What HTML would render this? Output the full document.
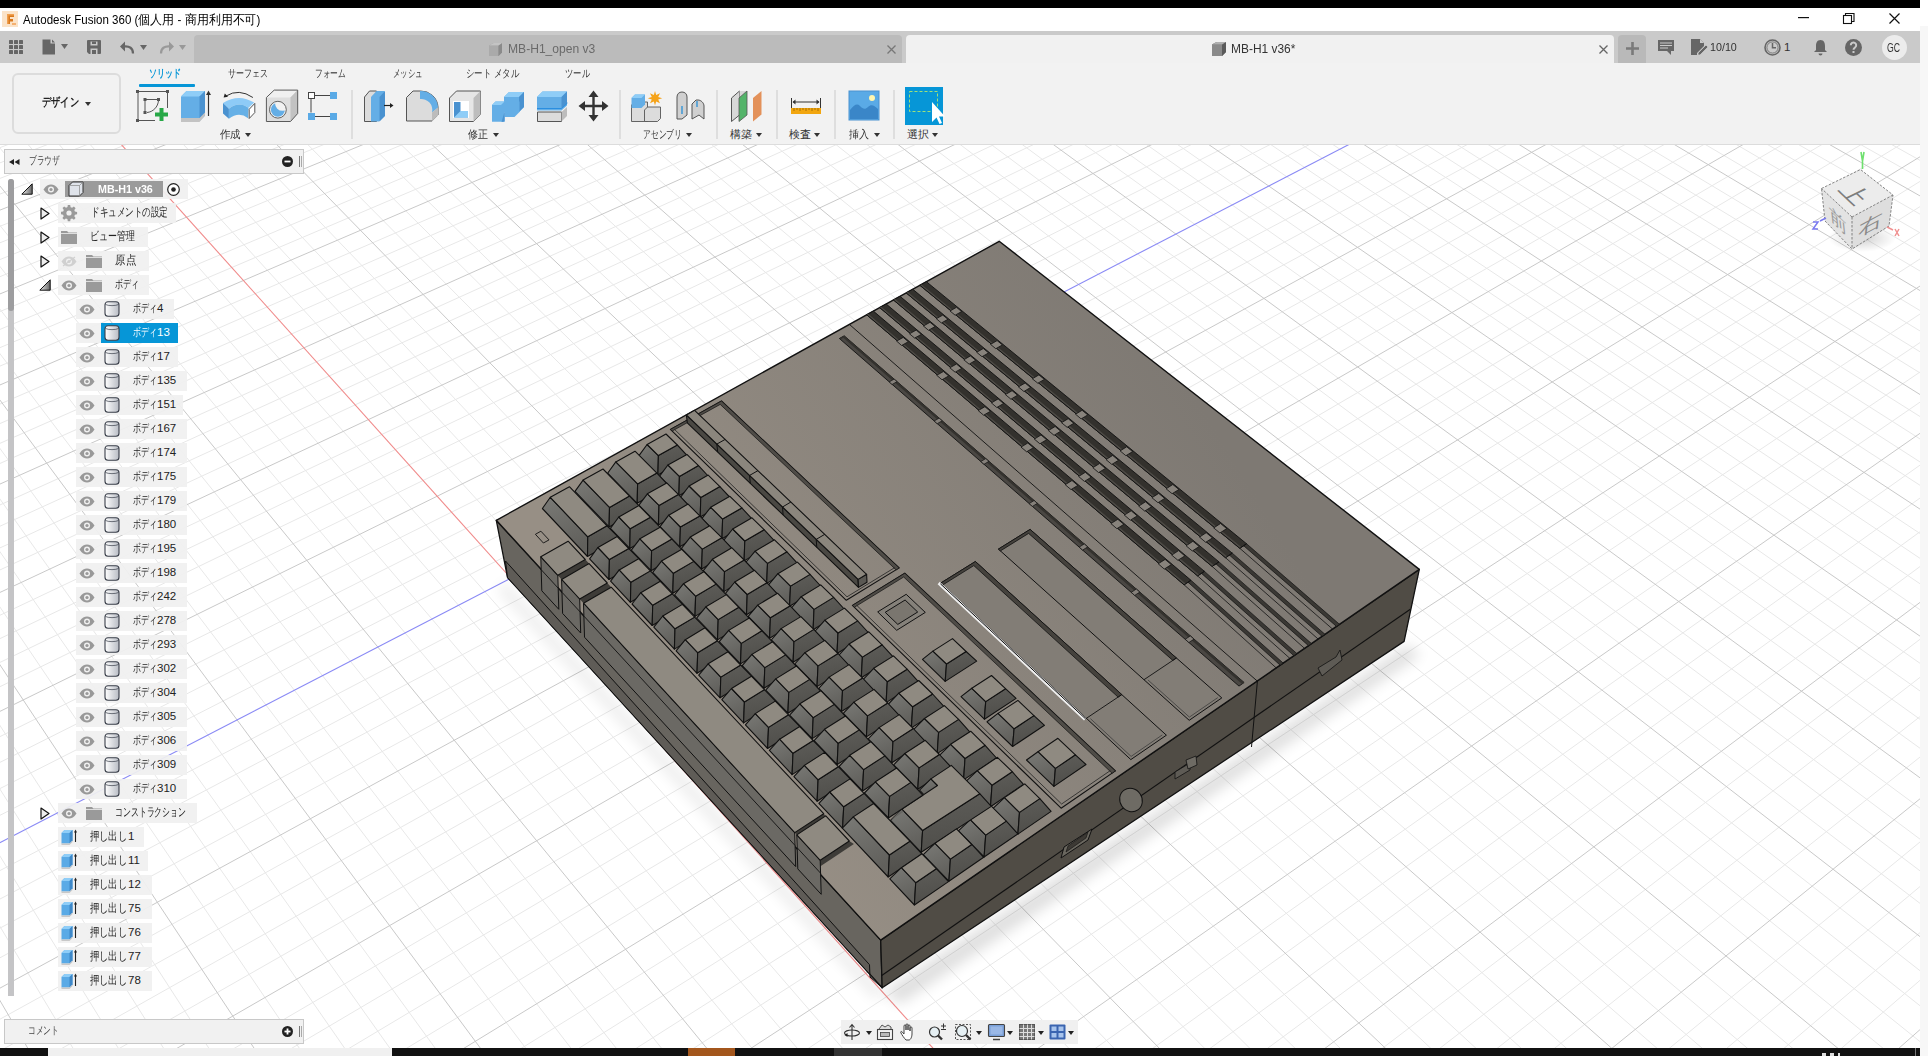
<!DOCTYPE html>
<html><head><meta charset="utf-8">
<style>
*{box-sizing:border-box;margin:0;padding:0}
html,body{width:1928px;height:1056px;overflow:hidden;background:#fff;font-family:"Liberation Sans",sans-serif;color:#333}
.a{position:absolute}
svg{position:absolute;overflow:visible}
.t{position:absolute;white-space:nowrap;line-height:1}
#canvas{position:absolute;left:0;top:144px;width:1920px;height:904px;overflow:hidden;background:#fff}
.row{position:absolute;height:20px;background:rgba(240,240,240,0.93)}
.rl{position:absolute;top:4px;font-size:11.5px;color:#222;white-space:nowrap;line-height:12px}
</style></head><body>
<div id="canvas"><svg style="left:0;top:0" width="1920" height="904" viewBox="0 144 1920 904">
<path d="M-755.3 275.7L1115.5 -389.9M-749.7 288.8L1127.2 -383.8M-744.0 302.1L1139.0 -377.7M-738.3 315.5L1150.9 -371.4M-726.6 342.8L1175.1 -358.8M-720.7 356.7L1187.3 -352.4M-714.6 370.8L1199.7 -346.0M-708.5 385.1L1212.1 -339.5M-696.1 414.2L1237.4 -326.3M-689.7 429.1L1250.1 -319.7M-683.3 444.2L1263.0 -312.9M-676.8 459.4L1276.0 -306.2M-663.5 490.5L1302.4 -292.4M-656.7 506.4L1315.8 -285.4M-649.8 522.5L1329.3 -278.4M-642.8 538.9L1342.9 -271.3M-628.5 572.2L1370.5 -256.9M-621.3 589.2L1384.5 -249.6M-613.9 606.5L1398.6 -242.2M-606.4 624.0L1412.8 -234.8M-591.1 659.8L1441.7 -219.7M-583.3 678.1L1456.4 -212.1M-575.3 696.6L1471.2 -204.4M-567.3 715.4L1486.1 -196.6M-550.8 754.0L1516.4 -180.8M-542.4 773.7L1531.8 -172.7M-533.8 793.7L1547.3 -164.6M-525.2 814.0L1563.0 -156.5M-507.4 855.5L1594.8 -139.9M-498.3 876.8L1610.9 -131.5M-489.0 898.4L1627.2 -123.0M-479.6 920.4L1643.7 -114.4M-460.4 965.4L1677.1 -96.9M-450.5 988.5L1694.1 -88.1M-440.5 1011.9L1711.2 -79.1M-430.3 1035.7L1728.5 -70.1M-409.4 1084.6L1763.7 -51.7M-398.7 1109.7L1781.6 -42.4M-387.8 1135.2L1799.6 -33.0M-376.7 1161.1L1817.9 -23.5M-353.9 1214.4L1854.9 -4.1M-342.2 1241.8L1873.8 5.7M-330.3 1269.6L1892.8 15.6M-318.2 1298.0L1912.1 25.7M-293.3 1356.3L1951.2 46.1M-280.4 1386.2L1971.1 56.4M-267.4 1416.8L1991.2 66.9M-254.1 1447.9L2011.5 77.5M-226.7 1512.0L2052.8 99.1M-212.6 1545.0L2073.8 110.1M-198.2 1578.6L2095.1 121.1M-183.5 1612.9L2116.6 132.4M-153.3 1683.6L2160.4 155.2M-137.7 1720.1L2182.6 166.8M-121.8 1757.3L2205.1 178.6M-105.5 1795.3L2227.9 190.4M-71.9 1873.8L2274.3 214.6M-54.6 1914.4L2297.9 227.0M-36.9 1955.8L2321.8 239.4M-18.8 1998.2L2346.0 252.0M18.7 2085.8L2395.3 277.7M38.1 2131.1L2420.4 290.8M57.9 2177.5L2445.8 304.1M78.2 2225.0L2471.5 317.5M120.3 2323.4L2523.9 344.9M142.1 2374.4L2550.6 358.8M164.4 2426.7L2577.7 372.9M187.4 2480.3L2605.1 387.2M235.0 2591.6L2661.0 416.4M259.7 2649.4L2689.5 431.2M285.1 2708.8L2718.3 446.3M311.2 2769.8L2747.6 461.6M365.5 2896.8L2807.3 492.7M393.8 2963.0L2837.8 508.6M422.9 3031.0L2868.7 524.7M452.8 3101.0L2900.0 541.1M-732.3 252.8L536.9 3116.0M-704.1 242.8L589.1 3060.3M-676.2 232.9L640.1 3005.8M-648.5 223.1L690.0 2952.5M-593.9 203.8L786.5 2849.4M-567.0 194.3L833.2 2799.5M-540.3 184.9L878.9 2750.7M-513.9 175.6L923.7 2702.8M-461.8 157.2L1010.5 2610.1M-436.1 148.1L1052.6 2565.1M-410.6 139.1L1093.8 2521.1M-385.4 130.2L1134.3 2477.9M-335.6 112.6L1212.7 2394.1M-311.0 103.9L1250.8 2353.3M-286.7 95.3L1288.2 2313.4M-262.5 86.8L1324.9 2274.2M-214.9 69.9L1396.2 2198.0M-191.4 61.6L1430.9 2161.0M-168.1 53.4L1464.9 2124.6M-145.0 45.2L1498.4 2088.9M-99.4 29.1L1563.4 2019.4M-76.9 21.2L1595.1 1985.6M-54.6 13.3L1626.2 1952.3M-32.5 5.5L1656.8 1919.6M11.2 -10.0L1716.4 1855.9M32.8 -17.6L1745.5 1824.9M54.2 -25.1L1774.1 1794.4M75.4 -32.6L1802.2 1764.4M117.3 -47.4L1857.0 1705.8M138.0 -54.7L1883.8 1677.2M158.5 -62.0L1910.1 1649.1M178.8 -69.2L1936.0 1621.4M219.1 -83.4L1986.6 1567.4M238.9 -90.4L2011.3 1541.0M258.7 -97.4L2035.6 1515.0M278.2 -104.3L2059.5 1489.4M316.9 -118.0L2106.4 1439.4M335.9 -124.7L2129.3 1414.9M354.9 -131.4L2151.8 1390.8M373.7 -138.0L2174.0 1367.1M410.8 -151.2L2217.5 1320.7M429.2 -157.7L2238.7 1298.0M447.4 -164.1L2259.7 1275.6M465.5 -170.5L2280.4 1253.5M501.3 -183.1L2320.8 1210.3M518.9 -189.4L2340.6 1189.1M536.5 -195.6L2360.1 1168.3M553.9 -201.7L2379.4 1147.7M588.3 -213.9L2417.1 1107.4M605.3 -219.9L2435.6 1087.6M622.2 -225.9L2453.9 1068.1M639.0 -231.8L2471.9 1048.9M672.2 -243.5L2507.2 1011.2M688.6 -249.3L2524.5 992.7M704.9 -255.0L2541.6 974.4M721.0 -260.8L2558.4 956.4M753.0 -272.1L2591.5 921.1M768.8 -277.7L2607.7 903.8M784.6 -283.2L2623.8 886.6M800.1 -288.7L2639.6 869.7M831.0 -299.6L2670.7 836.5M846.3 -305.0L2685.9 820.2M861.4 -310.4L2701.0 804.1M876.5 -315.7L2715.9 788.2M906.3 -326.2L2745.1 757.0M921.0 -331.4L2759.5 741.7M935.7 -336.6L2773.6 726.5M950.2 -341.7L2787.7 711.5M979.0 -351.9L2815.2 682.1M993.3 -356.9L2828.8 667.6M1007.4 -361.9L2842.2 653.3M1021.5 -366.9L2855.4 639.2M1049.3 -376.7L2881.4 611.4M1063.1 -381.6L2894.2 597.7M1076.7 -386.4L2906.9 584.2M1090.3 -391.2L2919.4 570.8" stroke="#e8e8e8" stroke-width="1" fill="none"/>
<path d="M-760.8 262.8L1103.8 -396.0M-732.5 329.0L1163.0 -365.2M-702.3 399.6L1224.7 -333.0M-670.2 474.9L1289.2 -299.3M-635.7 555.4L1356.6 -264.1M-598.8 641.8L1427.2 -227.3M-559.1 734.6L1501.2 -188.7M-516.3 834.6L1578.8 -148.2M-470.1 942.7L1660.3 -105.7M-365.4 1187.5L1836.3 -13.9M-305.8 1326.9L1931.5 35.8M-240.5 1479.6L2032.0 88.2M-168.6 1647.9L2138.3 143.7M-88.9 1834.2L2251.0 202.5M-0.3 2041.5L2370.5 264.8M99.0 2273.6L2497.5 331.1M210.9 2535.2L2632.8 401.7M338.0 2832.4L2777.3 477.0M-760.8 262.8L483.6 3173.0M-621.0 213.4L738.7 2900.4M-487.7 166.3L967.6 2656.0M-360.4 121.3L1173.9 2435.6M-238.6 78.3L1360.9 2235.8M-122.1 37.2L1531.2 2053.9M96.4 -40.1L1829.8 1734.8M199.0 -76.3L1961.5 1594.2M297.6 -111.2L2083.1 1464.2M392.3 -144.6L2195.9 1343.7M483.5 -176.8L2300.7 1231.7M571.2 -207.8L2398.4 1127.4M655.7 -237.7L2489.7 1029.9M737.1 -266.4L2575.1 938.6M815.6 -294.2L2655.2 853.0M891.4 -321.0L2730.6 772.5M964.7 -346.8L2801.5 696.7M1035.4 -371.8L2868.5 625.2" stroke="#c9c9c9" stroke-width="1" fill="none"/>
<path d="M-10.6 -2.3L1686.9 1887.5" stroke="#f08a8a" stroke-width="1.1" fill="none"/>
<path d="M-420.0 1060.0L1746.0 -61.0" stroke="#8a8af5" stroke-width="1.1" fill="none"/>
<defs><linearGradient id="topg" gradientUnits="userSpaceOnUse" x1="672.8" y1="713.0" x2="1193.9" y2="393.4"><stop offset="0" stop-color="#978f85"/><stop offset="1" stop-color="#7e7973"/></linearGradient></defs>
<defs><linearGradient id="kfg" x1="0" y1="0" x2="0.35" y2="1"><stop offset="0" stop-color="#7a7a76"/><stop offset="1" stop-color="#61605c"/></linearGradient><linearGradient id="krg" x1="0" y1="0" x2="0.2" y2="1"><stop offset="0" stop-color="#5e5d59"/><stop offset="1" stop-color="#4f4e4a"/></linearGradient></defs>
<defs><filter id="shb" x="-20%" y="-20%" width="140%" height="140%"><feGaussianBlur stdDeviation="7"/></filter></defs>
<polygon points="884,992 1408,645 1420,655 900,1004" fill="#000" opacity="0.13" filter="url(#shb)"/>
<polygon points="505,582 884,992 876,1000 498,590" fill="#000" opacity="0.08" filter="url(#shb)"/>
<polygon points="496.3,520.3 880.7,940.1 882.2,987.8 507.5,577.5" fill="#68655f" stroke="#111" stroke-width="1.3" stroke-linejoin="round"/>
<polygon points="880.7,940.1 1419.3,569.4 1404.1,641.4 882.2,987.8" fill="#504c45" stroke="#111" stroke-width="1.3" stroke-linejoin="round"/>
<polyline points="881.4,975.7 1410.3,609.2" fill="none" stroke="#111" stroke-width="1.1"/>
<polyline points="1257.5,680.0 1251.5,747.0" fill="none" stroke="#111" stroke-width="1.0"/>
<polygon points="505.5,561.0 869.5,964.7 870.0,977.0 882.2,987.8 507.5,577.5" fill="#5f5c57" stroke="#111" stroke-width="1.0" stroke-linejoin="round"/>
<polygon points="1061.0,858.0 1088.0,840.0 1092.0,829.0 1064.0,847.0" fill="#6a675f" stroke="#111" stroke-width="1.0" stroke-linejoin="round"/>
<polygon points="1066.0,852.0 1086.0,838.0 1088.0,832.0 1068.0,846.0" fill="#3d3a35" stroke="#111" stroke-width="0.6" stroke-linejoin="round"/>
<ellipse cx="1131" cy="800" rx="11" ry="12" fill="#6e6b64" stroke="#111" stroke-width="1" transform="rotate(-35 1131 800)"/>
<polygon points="1175.0,772.0 1190.0,763.0 1190.0,770.0 1175.0,779.0" fill="#5e5b55" stroke="#111" stroke-width="0.8" stroke-linejoin="round"/>
<polygon points="1186.0,760.0 1196.0,756.0 1197.0,765.0 1188.0,769.0" fill="#6e6b64" stroke="#111" stroke-width="0.8" stroke-linejoin="round"/>
<polygon points="1318.0,668.0 1336.0,657.0 1340.0,650.0 1342.0,660.0 1322.0,676.0" fill="#5e5b55" stroke="#111" stroke-width="0.8" stroke-linejoin="round"/>
<polygon points="496.3,520.3 880.7,940.1 1419.3,569.4 999.2,241.3" fill="url(#topg)" stroke="#111" stroke-width="1.4" stroke-linejoin="round"/>
<polyline points="849.4,324.4 1257.2,681.0" fill="none" stroke="#111" stroke-width="0.9"/>
<polygon points="866.7,314.8 1184.1,584.8 1191.0,580.3 873.4,311.1" fill="#33312d" stroke="#111" stroke-width="0.9" stroke-linejoin="round"/>
<polygon points="866.7,314.8 1184.1,584.8 1185.8,583.7 868.4,313.9" fill="#4d4a45" stroke="none" stroke-width="1.1" stroke-linejoin="round"/>
<polyline points="866.7,314.8 1184.1,584.8" fill="none" stroke="#111" stroke-width="0.9"/>
<polygon points="1188.0,582.2 1280.2,665.2 1283.2,663.1 1191.0,580.3" fill="#3a3834" stroke="#111" stroke-width="0.7" stroke-linejoin="round"/>
<polyline points="1184.1,584.8 1276.2,667.9" fill="none" stroke="#111" stroke-width="0.8"/>
<polyline points="1184.1,584.8 1191.0,580.3" fill="none" stroke="#111" stroke-width="0.8"/>
<polygon points="896.6,341.1 901.6,345.5 908.3,341.7 903.2,337.4" fill="#88837c" stroke="#111" stroke-width="0.8" stroke-linejoin="round"/>
<polygon points="936.7,375.3 942.0,379.8 948.7,375.9 943.4,371.5" fill="#88837c" stroke="#111" stroke-width="0.8" stroke-linejoin="round"/>
<polygon points="978.2,410.6 983.6,415.2 990.4,411.3 984.9,406.7" fill="#88837c" stroke="#111" stroke-width="0.8" stroke-linejoin="round"/>
<polygon points="1021.0,447.1 1026.6,451.8 1033.4,447.7 1027.8,443.0" fill="#88837c" stroke="#111" stroke-width="0.8" stroke-linejoin="round"/>
<polygon points="1065.2,484.7 1071.0,489.6 1077.8,485.4 1072.0,480.5" fill="#88837c" stroke="#111" stroke-width="0.8" stroke-linejoin="round"/>
<polygon points="1110.9,523.6 1116.9,528.7 1123.8,524.3 1117.8,519.3" fill="#88837c" stroke="#111" stroke-width="0.8" stroke-linejoin="round"/>
<polygon points="1158.2,563.8 1164.3,569.1 1171.3,564.6 1165.1,559.4" fill="#88837c" stroke="#111" stroke-width="0.8" stroke-linejoin="round"/>
<polygon points="879.7,307.6 1197.6,575.9 1204.5,571.4 886.2,304.0" fill="#33312d" stroke="#111" stroke-width="0.9" stroke-linejoin="round"/>
<polygon points="879.7,307.6 1197.6,575.9 1199.4,574.8 881.3,306.7" fill="#4d4a45" stroke="none" stroke-width="1.1" stroke-linejoin="round"/>
<polyline points="879.7,307.6 1197.6,575.9" fill="none" stroke="#111" stroke-width="0.9"/>
<polygon points="1201.5,573.4 1293.9,655.7 1296.9,653.6 1204.5,571.4" fill="#3a3834" stroke="#111" stroke-width="0.7" stroke-linejoin="round"/>
<polyline points="1197.6,575.9 1289.9,658.4" fill="none" stroke="#111" stroke-width="0.8"/>
<polyline points="1197.6,575.9 1204.5,571.4" fill="none" stroke="#111" stroke-width="0.8"/>
<polygon points="909.5,333.8 914.6,338.1 921.3,334.4 916.2,330.1" fill="#88837c" stroke="#111" stroke-width="0.8" stroke-linejoin="round"/>
<polygon points="949.8,367.8 955.1,372.2 961.7,368.4 956.5,364.0" fill="#88837c" stroke="#111" stroke-width="0.8" stroke-linejoin="round"/>
<polygon points="991.4,402.9 996.8,407.5 1003.5,403.5 998.1,398.9" fill="#88837c" stroke="#111" stroke-width="0.8" stroke-linejoin="round"/>
<polygon points="1034.3,439.1 1039.9,443.8 1046.6,439.7 1041.0,435.0" fill="#88837c" stroke="#111" stroke-width="0.8" stroke-linejoin="round"/>
<polygon points="1078.6,476.5 1084.4,481.4 1091.2,477.2 1085.3,472.3" fill="#88837c" stroke="#111" stroke-width="0.8" stroke-linejoin="round"/>
<polygon points="1124.3,515.1 1130.3,520.2 1137.2,515.9 1131.2,510.8" fill="#88837c" stroke="#111" stroke-width="0.8" stroke-linejoin="round"/>
<polygon points="1171.7,555.1 1177.9,560.3 1184.8,555.9 1178.6,550.6" fill="#88837c" stroke="#111" stroke-width="0.8" stroke-linejoin="round"/>
<polygon points="893.5,300.0 1212.1,566.4 1219.0,561.9 900.0,296.3" fill="#33312d" stroke="#111" stroke-width="0.9" stroke-linejoin="round"/>
<polygon points="893.5,300.0 1212.1,566.4 1213.9,565.3 895.1,299.0" fill="#4d4a45" stroke="none" stroke-width="1.1" stroke-linejoin="round"/>
<polyline points="893.5,300.0 1212.1,566.4" fill="none" stroke="#111" stroke-width="0.9"/>
<polygon points="1216.0,563.9 1308.5,645.7 1311.5,643.6 1219.0,561.9" fill="#3a3834" stroke="#111" stroke-width="0.7" stroke-linejoin="round"/>
<polyline points="1212.1,566.4 1304.6,648.4" fill="none" stroke="#111" stroke-width="0.8"/>
<polyline points="1212.1,566.4 1219.0,561.9" fill="none" stroke="#111" stroke-width="0.8"/>
<polygon points="923.4,326.0 928.5,330.3 935.1,326.5 930.0,322.3" fill="#88837c" stroke="#111" stroke-width="0.8" stroke-linejoin="round"/>
<polygon points="963.8,359.8 969.1,364.2 975.7,360.3 970.4,355.9" fill="#88837c" stroke="#111" stroke-width="0.8" stroke-linejoin="round"/>
<polygon points="1005.4,394.6 1010.9,399.2 1017.5,395.2 1012.1,390.7" fill="#88837c" stroke="#111" stroke-width="0.8" stroke-linejoin="round"/>
<polygon points="1048.4,430.6 1054.0,435.3 1060.7,431.2 1055.1,426.5" fill="#88837c" stroke="#111" stroke-width="0.8" stroke-linejoin="round"/>
<polygon points="1092.8,467.7 1098.6,472.6 1105.4,468.4 1099.6,463.5" fill="#88837c" stroke="#111" stroke-width="0.8" stroke-linejoin="round"/>
<polygon points="1138.7,506.1 1144.7,511.1 1151.5,506.8 1145.5,501.8" fill="#88837c" stroke="#111" stroke-width="0.8" stroke-linejoin="round"/>
<polygon points="1186.1,545.8 1192.3,551.0 1199.2,546.5 1192.9,541.3" fill="#88837c" stroke="#111" stroke-width="0.8" stroke-linejoin="round"/>
<polygon points="906.2,292.9 1225.5,557.7 1232.3,553.2 912.8,289.3" fill="#33312d" stroke="#111" stroke-width="0.9" stroke-linejoin="round"/>
<polygon points="906.2,292.9 1225.5,557.7 1227.3,556.5 907.9,292.0" fill="#4d4a45" stroke="none" stroke-width="1.1" stroke-linejoin="round"/>
<polyline points="906.2,292.9 1225.5,557.7" fill="none" stroke="#111" stroke-width="0.9"/>
<polygon points="1229.4,555.1 1322.0,636.3 1325.0,634.3 1232.3,553.2" fill="#3a3834" stroke="#111" stroke-width="0.7" stroke-linejoin="round"/>
<polyline points="1225.5,557.7 1318.1,639.0" fill="none" stroke="#111" stroke-width="0.8"/>
<polyline points="1225.5,557.7 1232.3,553.2" fill="none" stroke="#111" stroke-width="0.8"/>
<polygon points="936.3,318.7 941.4,323.0 947.9,319.3 942.8,315.1" fill="#88837c" stroke="#111" stroke-width="0.8" stroke-linejoin="round"/>
<polygon points="976.7,352.3 982.0,356.7 988.6,352.9 983.3,348.5" fill="#88837c" stroke="#111" stroke-width="0.8" stroke-linejoin="round"/>
<polygon points="1018.4,386.9 1023.9,391.5 1030.5,387.5 1025.1,383.0" fill="#88837c" stroke="#111" stroke-width="0.8" stroke-linejoin="round"/>
<polygon points="1061.5,422.7 1067.1,427.3 1073.8,423.3 1068.2,418.7" fill="#88837c" stroke="#111" stroke-width="0.8" stroke-linejoin="round"/>
<polygon points="1106.0,459.6 1111.8,464.4 1118.5,460.3 1112.7,455.4" fill="#88837c" stroke="#111" stroke-width="0.8" stroke-linejoin="round"/>
<polygon points="1151.9,497.7 1158.0,502.7 1164.7,498.4 1158.7,493.4" fill="#88837c" stroke="#111" stroke-width="0.8" stroke-linejoin="round"/>
<polygon points="1199.5,537.1 1205.7,542.3 1212.5,537.9 1206.2,532.7" fill="#88837c" stroke="#111" stroke-width="0.8" stroke-linejoin="round"/>
<polygon points="919.9,285.3 1239.8,548.3 1246.6,543.8 926.4,281.7" fill="#33312d" stroke="#111" stroke-width="0.9" stroke-linejoin="round"/>
<polygon points="919.9,285.3 1239.8,548.3 1241.5,547.2 921.5,284.4" fill="#4d4a45" stroke="none" stroke-width="1.1" stroke-linejoin="round"/>
<polyline points="919.9,285.3 1239.8,548.3" fill="none" stroke="#111" stroke-width="0.9"/>
<polygon points="1243.7,545.8 1336.5,626.4 1339.5,624.3 1246.6,543.8" fill="#3a3834" stroke="#111" stroke-width="0.7" stroke-linejoin="round"/>
<polyline points="1239.8,548.3 1332.6,629.1" fill="none" stroke="#111" stroke-width="0.8"/>
<polyline points="1239.8,548.3 1246.6,543.8" fill="none" stroke="#111" stroke-width="0.8"/>
<polygon points="950.0,311.0 955.1,315.2 961.6,311.6 956.5,307.3" fill="#88837c" stroke="#111" stroke-width="0.8" stroke-linejoin="round"/>
<polygon points="990.5,344.4 995.8,348.7 1002.4,344.9 997.1,340.6" fill="#88837c" stroke="#111" stroke-width="0.8" stroke-linejoin="round"/>
<polygon points="1032.3,378.8 1037.8,383.2 1044.4,379.4 1038.9,374.9" fill="#88837c" stroke="#111" stroke-width="0.8" stroke-linejoin="round"/>
<polygon points="1075.5,414.2 1081.1,418.9 1087.8,414.9 1082.1,410.3" fill="#88837c" stroke="#111" stroke-width="0.8" stroke-linejoin="round"/>
<polygon points="1120.1,450.9 1125.9,455.7 1132.6,451.6 1126.7,446.8" fill="#88837c" stroke="#111" stroke-width="0.8" stroke-linejoin="round"/>
<polygon points="1166.1,488.8 1172.1,493.7 1178.9,489.5 1172.8,484.5" fill="#88837c" stroke="#111" stroke-width="0.8" stroke-linejoin="round"/>
<polygon points="1213.7,527.9 1219.9,533.0 1226.7,528.6 1220.5,523.5" fill="#88837c" stroke="#111" stroke-width="0.8" stroke-linejoin="round"/>
<polygon points="839.4,338.5 1239.0,686.1 1244.1,682.5 844.2,335.8" fill="#4a4743" stroke="#111" stroke-width="0.9" stroke-linejoin="round"/>
<polygon points="844.2,335.8 1244.1,682.5 1242.1,684.0 843.3,337.8 840.4,339.5 839.4,338.5" fill="#34322e" stroke="none" stroke-width="1.1" stroke-linejoin="round"/>
<polygon points="889.2,381.9 892.1,384.5 897.1,381.6 894.1,379.1" fill="#85807a" stroke="#111" stroke-width="0.7" stroke-linejoin="round"/>
<polygon points="934.2,421.0 937.2,423.7 942.2,420.8 939.1,418.1" fill="#85807a" stroke="#111" stroke-width="0.7" stroke-linejoin="round"/>
<polygon points="980.8,461.5 984.0,464.3 988.9,461.3 985.8,458.6" fill="#85807a" stroke="#111" stroke-width="0.7" stroke-linejoin="round"/>
<polygon points="1029.1,503.6 1032.4,506.4 1037.4,503.3 1034.1,500.5" fill="#85807a" stroke="#111" stroke-width="0.7" stroke-linejoin="round"/>
<polygon points="1079.2,547.1 1082.6,550.1 1087.7,546.9 1084.3,543.9" fill="#85807a" stroke="#111" stroke-width="0.7" stroke-linejoin="round"/>
<polygon points="1131.2,592.4 1134.7,595.4 1139.8,592.1 1136.3,589.0" fill="#85807a" stroke="#111" stroke-width="0.7" stroke-linejoin="round"/>
<polygon points="1185.2,639.3 1188.9,642.5 1194.0,639.1 1190.3,635.9" fill="#85807a" stroke="#111" stroke-width="0.7" stroke-linejoin="round"/>
<polygon points="940.8,583.0 1130.8,759.6 1166.4,735.2 975.4,561.5" fill="#827d76" stroke="#111" stroke-width="1.0" stroke-linejoin="round"/>
<polygon points="975.4,561.5 1121.8,694.6 1118.1,697.1 973.8,565.6 942.8,584.9 940.8,583.0" fill="#45423d" stroke="#111" stroke-width="0.8" stroke-linejoin="round"/>
<polyline points="1086.4,718.3 1121.8,694.6" fill="none" stroke="#111" stroke-width="0.9"/>
<polyline points="1090.4,718.6 1131.1,756.4 1162.3,734.9" fill="none" stroke="#333" stroke-width="0.7"/>
<polygon points="998.4,549.1 1189.2,720.3 1221.8,697.9 1030.1,529.4" fill="#827d76" stroke="#111" stroke-width="1.0" stroke-linejoin="round"/>
<polygon points="1030.1,529.4 1176.4,658.0 1172.8,660.4 1028.6,533.4 1000.4,550.9 998.4,549.1" fill="#45423d" stroke="#111" stroke-width="0.8" stroke-linejoin="round"/>
<polyline points="1144.0,679.7 1176.4,658.0" fill="none" stroke="#111" stroke-width="0.9"/>
<polyline points="1147.9,679.9 1189.4,717.1 1217.8,697.6" fill="none" stroke="#333" stroke-width="0.7"/>
<polyline points="938.7,583.0 1085.1,719.3" fill="none" stroke="#eeeeee" stroke-width="3.2"/>
<polyline points="940.4,583.8 1085.6,718.9" fill="none" stroke="#111" stroke-width="1.0"/>
<polygon points="670.4,429.4 846.3,600.3 899.2,567.9 721.5,401.0" fill="url(#topg)" stroke="#111" stroke-width="1.1" stroke-linejoin="round"/>
<polygon points="721.5,401.0 899.2,567.9 896.1,569.9 720.2,404.4 672.1,431.1 670.4,429.4" fill="#4f4c47" stroke="#111" stroke-width="0.7" stroke-linejoin="round"/>
<polyline points="674.4,429.3 847.0,596.8 894.6,567.7" fill="none" stroke="#222" stroke-width="0.8"/>
<polygon points="686.4,414.9 858.1,579.4 858.5,587.4 687.3,422.8" fill="#4a4843" stroke="#111" stroke-width="1.1" stroke-linejoin="round"/>
<polygon points="858.1,579.4 866.6,574.3 867.0,582.3 858.5,587.4" fill="#5a5853" stroke="#111" stroke-width="1.1" stroke-linejoin="round"/>
<polygon points="686.4,414.9 858.1,579.4 866.6,574.3 694.6,410.3" fill="#8b867d" stroke="#111" stroke-width="1.1" stroke-linejoin="round"/>
<polyline points="716.8,444.1 725.2,439.4" fill="none" stroke="#111" stroke-width="1.0"/>
<polyline points="716.8,444.1 717.7,452.0" fill="none" stroke="#111" stroke-width="1.0"/>
<polyline points="749.6,475.4 758.0,470.6" fill="none" stroke="#111" stroke-width="1.0"/>
<polyline points="749.6,475.4 750.3,483.4" fill="none" stroke="#111" stroke-width="1.0"/>
<polyline points="782.5,507.0 790.9,502.0" fill="none" stroke="#111" stroke-width="1.0"/>
<polyline points="782.5,507.0 783.1,515.0" fill="none" stroke="#111" stroke-width="1.0"/>
<polyline points="816.2,539.4 824.8,534.3" fill="none" stroke="#111" stroke-width="1.0"/>
<polyline points="816.2,539.4 816.8,547.4" fill="none" stroke="#111" stroke-width="1.0"/>
<polygon points="852.4,605.4 1061.1,808.2 1115.4,770.9 904.8,573.2" fill="url(#topg)" stroke="#111" stroke-width="1.1" stroke-linejoin="round"/>
<polygon points="904.8,573.2 1115.4,770.9 1112.1,773.2 903.7,577.0 854.3,607.3 852.4,605.4" fill="#4f4c47" stroke="#111" stroke-width="0.7" stroke-linejoin="round"/>
<polyline points="856.7,605.3 1061.6,804.0 1110.3,770.6" fill="none" stroke="#222" stroke-width="0.8"/>
<polygon points="877.7,611.9 896.7,630.3 925.3,612.4 906.2,594.3" fill="#85817a" stroke="#111" stroke-width="1.0" stroke-linejoin="round"/>
<polygon points="885.2,612.3 897.8,624.4 917.7,612.0 905.1,600.0" fill="#7a766f" stroke="#111" stroke-width="1.0" stroke-linejoin="round"/>
<polygon points="932.9,651.1 946.5,664.0 945.2,681.4 922.5,659.4" fill="url(#kfg)" stroke="#111" stroke-width="1.1" stroke-linejoin="round"/>
<polygon points="946.5,664.0 966.1,651.5 976.7,661.1 945.2,681.4" fill="url(#krg)" stroke="#111" stroke-width="1.1" stroke-linejoin="round"/>
<polygon points="932.9,651.1 946.5,664.0 966.1,651.5 952.5,638.6" fill="#8f8a81" stroke="#111" stroke-width="1.1" stroke-linejoin="round"/>
<polygon points="971.8,688.3 985.7,701.6 984.4,719.2 961.0,696.6" fill="url(#kfg)" stroke="#111" stroke-width="1.1" stroke-linejoin="round"/>
<polygon points="985.7,701.6 1005.5,688.7 1016.1,698.4 984.4,719.2" fill="url(#krg)" stroke="#111" stroke-width="1.1" stroke-linejoin="round"/>
<polygon points="971.8,688.3 985.7,701.6 1005.5,688.7 991.5,675.5" fill="#8f8a81" stroke="#111" stroke-width="1.1" stroke-linejoin="round"/>
<polygon points="998.0,713.4 1014.1,728.8 1012.6,746.5 987.0,721.8" fill="url(#kfg)" stroke="#111" stroke-width="1.1" stroke-linejoin="round"/>
<polygon points="1014.1,728.8 1033.9,715.6 1044.5,725.3 1012.6,746.5" fill="url(#krg)" stroke="#111" stroke-width="1.1" stroke-linejoin="round"/>
<polygon points="998.0,713.4 1014.1,728.8 1033.9,715.6 1017.9,700.4" fill="#8f8a81" stroke="#111" stroke-width="1.1" stroke-linejoin="round"/>
<polygon points="1038.0,751.7 1055.4,768.4 1053.9,786.4 1026.5,760.0" fill="url(#kfg)" stroke="#111" stroke-width="1.1" stroke-linejoin="round"/>
<polygon points="1055.4,768.4 1075.4,754.8 1086.0,764.5 1053.9,786.4" fill="url(#krg)" stroke="#111" stroke-width="1.1" stroke-linejoin="round"/>
<polygon points="1038.0,751.7 1055.4,768.4 1075.4,754.8 1057.9,738.3" fill="#8f8a81" stroke="#111" stroke-width="1.1" stroke-linejoin="round"/>
<polygon points="535.4,534.3 543.4,543.0 549.0,539.9 540.9,531.2" fill="url(#topg)" stroke="#111" stroke-width="0.9" stroke-linejoin="round"/>
<polygon points="647.1,444.5 658.4,455.6 657.9,474.9 638.8,455.9" fill="url(#kfg)" stroke="#111" stroke-width="1.1" stroke-linejoin="round"/>
<polygon points="658.4,455.6 677.3,445.0 688.9,457.4 657.9,474.9" fill="url(#krg)" stroke="#111" stroke-width="1.1" stroke-linejoin="round"/>
<polygon points="647.1,444.5 658.4,455.6 677.3,445.0 666.0,434.0" fill="#8f8a81" stroke="#111" stroke-width="1.1" stroke-linejoin="round"/>
<polygon points="667.9,465.0 679.4,476.4 678.9,495.8 659.4,476.4" fill="url(#kfg)" stroke="#111" stroke-width="1.1" stroke-linejoin="round"/>
<polygon points="679.4,476.4 698.5,465.6 710.0,478.0 678.9,495.8" fill="url(#krg)" stroke="#111" stroke-width="1.1" stroke-linejoin="round"/>
<polygon points="667.9,465.0 679.4,476.4 698.5,465.6 686.9,454.4" fill="#8f8a81" stroke="#111" stroke-width="1.1" stroke-linejoin="round"/>
<polygon points="689.1,486.0 700.8,497.5 700.2,517.1 680.4,497.4" fill="url(#kfg)" stroke="#111" stroke-width="1.1" stroke-linejoin="round"/>
<polygon points="700.8,497.5 719.9,486.6 731.5,499.0 700.2,517.1" fill="url(#krg)" stroke="#111" stroke-width="1.1" stroke-linejoin="round"/>
<polygon points="689.1,486.0 700.8,497.5 719.9,486.6 708.2,475.1" fill="#8f8a81" stroke="#111" stroke-width="1.1" stroke-linejoin="round"/>
<polygon points="710.7,507.3 722.6,519.1 722.0,538.8 701.8,518.7" fill="url(#kfg)" stroke="#111" stroke-width="1.1" stroke-linejoin="round"/>
<polygon points="722.6,519.1 741.8,507.9 753.4,520.4 722.0,538.8" fill="url(#krg)" stroke="#111" stroke-width="1.1" stroke-linejoin="round"/>
<polygon points="710.7,507.3 722.6,519.1 741.8,507.9 729.9,496.3" fill="#8f8a81" stroke="#111" stroke-width="1.1" stroke-linejoin="round"/>
<polygon points="732.7,529.0 744.8,541.0 744.1,560.9 723.6,540.4" fill="url(#kfg)" stroke="#111" stroke-width="1.1" stroke-linejoin="round"/>
<polygon points="744.8,541.0 764.1,529.7 775.7,542.2 744.1,560.9" fill="url(#krg)" stroke="#111" stroke-width="1.1" stroke-linejoin="round"/>
<polygon points="732.7,529.0 744.8,541.0 764.1,529.7 752.0,517.8" fill="#8f8a81" stroke="#111" stroke-width="1.1" stroke-linejoin="round"/>
<polygon points="755.1,551.2 767.5,563.4 766.7,583.4 745.7,562.5" fill="url(#kfg)" stroke="#111" stroke-width="1.1" stroke-linejoin="round"/>
<polygon points="767.5,563.4 786.9,551.8 798.4,564.4 766.7,583.4" fill="url(#krg)" stroke="#111" stroke-width="1.1" stroke-linejoin="round"/>
<polygon points="755.1,551.2 767.5,563.4 786.9,551.8 774.5,539.8" fill="#8f8a81" stroke="#111" stroke-width="1.1" stroke-linejoin="round"/>
<polygon points="777.9,573.7 790.5,586.1 789.6,606.3 768.3,585.1" fill="url(#kfg)" stroke="#111" stroke-width="1.1" stroke-linejoin="round"/>
<polygon points="790.5,586.1 810.0,574.4 821.6,587.0 789.6,606.3" fill="url(#krg)" stroke="#111" stroke-width="1.1" stroke-linejoin="round"/>
<polygon points="777.9,573.7 790.5,586.1 810.0,574.4 797.4,562.1" fill="#8f8a81" stroke="#111" stroke-width="1.1" stroke-linejoin="round"/>
<polygon points="801.2,596.7 814.0,609.4 813.1,629.7 791.4,608.0" fill="url(#kfg)" stroke="#111" stroke-width="1.1" stroke-linejoin="round"/>
<polygon points="814.0,609.4 833.6,597.4 845.1,610.0 813.1,629.7" fill="url(#krg)" stroke="#111" stroke-width="1.1" stroke-linejoin="round"/>
<polygon points="801.2,596.7 814.0,609.4 833.6,597.4 820.7,584.9" fill="#8f8a81" stroke="#111" stroke-width="1.1" stroke-linejoin="round"/>
<polygon points="824.9,620.1 838.0,633.0 837.0,653.5 814.8,631.5" fill="url(#kfg)" stroke="#111" stroke-width="1.1" stroke-linejoin="round"/>
<polygon points="838.0,633.0 857.6,620.9 869.2,633.5 837.0,653.5" fill="url(#krg)" stroke="#111" stroke-width="1.1" stroke-linejoin="round"/>
<polygon points="824.9,620.1 838.0,633.0 857.6,620.9 844.5,608.1" fill="#8f8a81" stroke="#111" stroke-width="1.1" stroke-linejoin="round"/>
<polygon points="849.1,644.0 862.4,657.1 861.3,677.8 838.7,655.3" fill="url(#kfg)" stroke="#111" stroke-width="1.1" stroke-linejoin="round"/>
<polygon points="862.4,657.1 882.1,644.8 893.6,657.4 861.3,677.8" fill="url(#krg)" stroke="#111" stroke-width="1.1" stroke-linejoin="round"/>
<polygon points="849.1,644.0 862.4,657.1 882.1,644.8 868.8,631.8" fill="#8f8a81" stroke="#111" stroke-width="1.1" stroke-linejoin="round"/>
<polygon points="873.7,668.3 887.3,681.7 886.1,702.6 863.1,679.7" fill="url(#kfg)" stroke="#111" stroke-width="1.1" stroke-linejoin="round"/>
<polygon points="887.3,681.7 907.1,669.2 918.6,681.8 886.1,702.6" fill="url(#krg)" stroke="#111" stroke-width="1.1" stroke-linejoin="round"/>
<polygon points="873.7,668.3 887.3,681.7 907.1,669.2 893.5,655.9" fill="#8f8a81" stroke="#111" stroke-width="1.1" stroke-linejoin="round"/>
<polygon points="898.8,693.2 912.7,706.8 911.4,727.9 888.0,704.5" fill="url(#kfg)" stroke="#111" stroke-width="1.1" stroke-linejoin="round"/>
<polygon points="912.7,706.8 932.6,694.0 944.1,706.7 911.4,727.9" fill="url(#krg)" stroke="#111" stroke-width="1.1" stroke-linejoin="round"/>
<polygon points="898.8,693.2 912.7,706.8 932.6,694.0 918.7,680.5" fill="#8f8a81" stroke="#111" stroke-width="1.1" stroke-linejoin="round"/>
<polygon points="924.4,718.5 938.6,732.4 937.2,753.6 913.3,729.8" fill="url(#kfg)" stroke="#111" stroke-width="1.1" stroke-linejoin="round"/>
<polygon points="938.6,732.4 958.6,719.4 970.0,732.1 937.2,753.6" fill="url(#krg)" stroke="#111" stroke-width="1.1" stroke-linejoin="round"/>
<polygon points="924.4,718.5 938.6,732.4 958.6,719.4 944.4,705.6" fill="#8f8a81" stroke="#111" stroke-width="1.1" stroke-linejoin="round"/>
<polygon points="950.6,744.3 965.0,758.5 963.6,779.9 939.2,755.6" fill="url(#kfg)" stroke="#111" stroke-width="1.1" stroke-linejoin="round"/>
<polygon points="965.0,758.5 985.1,745.3 996.5,758.0 963.6,779.9" fill="url(#krg)" stroke="#111" stroke-width="1.1" stroke-linejoin="round"/>
<polygon points="950.6,744.3 965.0,758.5 985.1,745.3 970.7,731.2" fill="#8f8a81" stroke="#111" stroke-width="1.1" stroke-linejoin="round"/>
<polygon points="977.3,770.7 992.0,785.2 990.5,806.8 965.5,781.9" fill="url(#kfg)" stroke="#111" stroke-width="1.1" stroke-linejoin="round"/>
<polygon points="992.0,785.2 1012.2,771.7 1023.5,784.4 990.5,806.8" fill="url(#krg)" stroke="#111" stroke-width="1.1" stroke-linejoin="round"/>
<polygon points="977.3,770.7 992.0,785.2 1012.2,771.7 997.4,757.3" fill="#8f8a81" stroke="#111" stroke-width="1.1" stroke-linejoin="round"/>
<polygon points="1004.5,797.6 1019.5,812.4 1017.9,834.1 992.5,808.8" fill="url(#kfg)" stroke="#111" stroke-width="1.1" stroke-linejoin="round"/>
<polygon points="1019.5,812.4 1039.8,798.6 1051.1,811.4 1017.9,834.1" fill="url(#krg)" stroke="#111" stroke-width="1.1" stroke-linejoin="round"/>
<polygon points="1004.5,797.6 1019.5,812.4 1039.8,798.6 1024.8,783.9" fill="#8f8a81" stroke="#111" stroke-width="1.1" stroke-linejoin="round"/>
<polygon points="615.8,461.9 637.6,483.9 637.2,503.3 607.6,473.2" fill="url(#kfg)" stroke="#111" stroke-width="1.1" stroke-linejoin="round"/>
<polygon points="637.6,483.9 656.9,473.1 668.7,485.5 637.2,503.3" fill="url(#krg)" stroke="#111" stroke-width="1.1" stroke-linejoin="round"/>
<polygon points="615.8,461.9 637.6,483.9 656.9,473.1 635.0,451.2" fill="#8f8a81" stroke="#111" stroke-width="1.1" stroke-linejoin="round"/>
<polygon points="647.4,493.8 659.0,505.4 658.4,525.0 638.9,505.1" fill="url(#kfg)" stroke="#111" stroke-width="1.1" stroke-linejoin="round"/>
<polygon points="659.0,505.4 678.3,494.4 690.1,506.8 658.4,525.0" fill="url(#krg)" stroke="#111" stroke-width="1.1" stroke-linejoin="round"/>
<polygon points="647.4,493.8 659.0,505.4 678.3,494.4 666.7,482.9" fill="#8f8a81" stroke="#111" stroke-width="1.1" stroke-linejoin="round"/>
<polygon points="668.7,515.2 680.4,527.0 679.8,546.8 660.0,526.6" fill="url(#kfg)" stroke="#111" stroke-width="1.1" stroke-linejoin="round"/>
<polygon points="680.4,527.0 699.8,515.9 711.6,528.3 679.8,546.8" fill="url(#krg)" stroke="#111" stroke-width="1.1" stroke-linejoin="round"/>
<polygon points="668.7,515.2 680.4,527.0 699.8,515.9 688.1,504.1" fill="#8f8a81" stroke="#111" stroke-width="1.1" stroke-linejoin="round"/>
<polygon points="690.3,537.1 702.3,549.1 701.6,569.0 681.4,548.4" fill="url(#kfg)" stroke="#111" stroke-width="1.1" stroke-linejoin="round"/>
<polygon points="702.3,549.1 721.8,537.7 733.6,550.2 701.6,569.0" fill="url(#krg)" stroke="#111" stroke-width="1.1" stroke-linejoin="round"/>
<polygon points="690.3,537.1 702.3,549.1 721.8,537.7 709.8,525.8" fill="#8f8a81" stroke="#111" stroke-width="1.1" stroke-linejoin="round"/>
<polygon points="712.4,559.3 724.5,571.6 723.9,591.6 703.3,570.7" fill="url(#kfg)" stroke="#111" stroke-width="1.1" stroke-linejoin="round"/>
<polygon points="724.5,571.6 744.2,560.0 756.0,572.5 723.9,591.6" fill="url(#krg)" stroke="#111" stroke-width="1.1" stroke-linejoin="round"/>
<polygon points="712.4,559.3 724.5,571.6 744.2,560.0 731.9,547.8" fill="#8f8a81" stroke="#111" stroke-width="1.1" stroke-linejoin="round"/>
<polygon points="734.8,582.0 747.2,594.5 746.5,614.7 725.5,593.3" fill="url(#kfg)" stroke="#111" stroke-width="1.1" stroke-linejoin="round"/>
<polygon points="747.2,594.5 766.9,582.7 778.7,595.3 746.5,614.7" fill="url(#krg)" stroke="#111" stroke-width="1.1" stroke-linejoin="round"/>
<polygon points="734.8,582.0 747.2,594.5 766.9,582.7 754.5,570.3" fill="#8f8a81" stroke="#111" stroke-width="1.1" stroke-linejoin="round"/>
<polygon points="757.7,605.1 770.4,617.8 769.6,638.2 748.2,616.4" fill="url(#kfg)" stroke="#111" stroke-width="1.1" stroke-linejoin="round"/>
<polygon points="770.4,617.8 790.2,605.8 802.0,618.4 769.6,638.2" fill="url(#krg)" stroke="#111" stroke-width="1.1" stroke-linejoin="round"/>
<polygon points="757.7,605.1 770.4,617.8 790.2,605.8 777.5,593.2" fill="#8f8a81" stroke="#111" stroke-width="1.1" stroke-linejoin="round"/>
<polygon points="781.1,628.6 794.0,641.6 793.1,662.2 771.3,640.0" fill="url(#kfg)" stroke="#111" stroke-width="1.1" stroke-linejoin="round"/>
<polygon points="794.0,641.6 813.8,629.4 825.6,642.0 793.1,662.2" fill="url(#krg)" stroke="#111" stroke-width="1.1" stroke-linejoin="round"/>
<polygon points="781.1,628.6 794.0,641.6 813.8,629.4 800.9,616.6" fill="#8f8a81" stroke="#111" stroke-width="1.1" stroke-linejoin="round"/>
<polygon points="804.9,652.7 818.0,665.9 817.0,686.6 794.8,664.0" fill="url(#kfg)" stroke="#111" stroke-width="1.1" stroke-linejoin="round"/>
<polygon points="818.0,665.9 838.0,653.5 849.7,666.1 817.0,686.6" fill="url(#krg)" stroke="#111" stroke-width="1.1" stroke-linejoin="round"/>
<polygon points="804.9,652.7 818.0,665.9 838.0,653.5 824.8,640.4" fill="#8f8a81" stroke="#111" stroke-width="1.1" stroke-linejoin="round"/>
<polygon points="829.1,677.1 842.5,690.6 841.5,711.5 818.8,688.4" fill="url(#kfg)" stroke="#111" stroke-width="1.1" stroke-linejoin="round"/>
<polygon points="842.5,690.6 862.6,678.0 874.3,690.6 841.5,711.5" fill="url(#krg)" stroke="#111" stroke-width="1.1" stroke-linejoin="round"/>
<polygon points="829.1,677.1 842.5,690.6 862.6,678.0 849.1,664.6" fill="#8f8a81" stroke="#111" stroke-width="1.1" stroke-linejoin="round"/>
<polygon points="853.9,702.1 867.5,715.9 866.4,736.9 843.3,713.4" fill="url(#kfg)" stroke="#111" stroke-width="1.1" stroke-linejoin="round"/>
<polygon points="867.5,715.9 887.7,703.0 899.4,715.7 866.4,736.9" fill="url(#krg)" stroke="#111" stroke-width="1.1" stroke-linejoin="round"/>
<polygon points="853.9,702.1 867.5,715.9 887.7,703.0 874.0,689.4" fill="#8f8a81" stroke="#111" stroke-width="1.1" stroke-linejoin="round"/>
<polygon points="879.1,727.6 893.0,741.6 891.8,762.8 868.2,738.8" fill="url(#kfg)" stroke="#111" stroke-width="1.1" stroke-linejoin="round"/>
<polygon points="893.0,741.6 913.3,728.5 925.0,741.2 891.8,762.8" fill="url(#krg)" stroke="#111" stroke-width="1.1" stroke-linejoin="round"/>
<polygon points="879.1,727.6 893.0,741.6 913.3,728.5 899.3,714.6" fill="#8f8a81" stroke="#111" stroke-width="1.1" stroke-linejoin="round"/>
<polygon points="904.8,753.5 919.1,767.9 917.8,789.3 893.7,764.8" fill="url(#kfg)" stroke="#111" stroke-width="1.1" stroke-linejoin="round"/>
<polygon points="919.1,767.9 939.4,754.5 951.1,767.2 917.8,789.3" fill="url(#krg)" stroke="#111" stroke-width="1.1" stroke-linejoin="round"/>
<polygon points="904.8,753.5 919.1,767.9 939.4,754.5 925.2,740.3" fill="#8f8a81" stroke="#111" stroke-width="1.1" stroke-linejoin="round"/>
<polygon points="970.3,819.6 985.7,835.1 984.1,857.0 958.4,830.8" fill="url(#kfg)" stroke="#111" stroke-width="1.1" stroke-linejoin="round"/>
<polygon points="985.7,835.1 1006.3,821.1 1017.8,833.9 984.1,857.0" fill="url(#krg)" stroke="#111" stroke-width="1.1" stroke-linejoin="round"/>
<polygon points="970.3,819.6 985.7,835.1 1006.3,821.1 990.8,805.7" fill="#8f8a81" stroke="#111" stroke-width="1.1" stroke-linejoin="round"/>
<polygon points="930.9,778.9 937.5,785.5 926.0,796.8 919.5,790.1" fill="url(#kfg)" stroke="#111" stroke-width="1.1" stroke-linejoin="round"/>
<polygon points="901.9,809.1 922.6,830.5 921.2,852.3 890.5,820.4" fill="url(#kfg)" stroke="#111" stroke-width="1.1" stroke-linejoin="round"/>
<polygon points="922.6,830.5 979.7,793.7 991.3,806.4 921.2,852.3" fill="url(#krg)" stroke="#111" stroke-width="1.1" stroke-linejoin="round"/>
<polygon points="937.5,785.5 901.9,809.1 890.5,820.4 926.0,796.8" fill="url(#kfg)" stroke="none" stroke-width="1.1" stroke-linejoin="round"/>
<polygon points="901.9,809.1 922.6,830.5 979.7,793.7 951.3,765.4 930.9,778.9 937.5,785.5" fill="#8f8a81" stroke="#111" stroke-width="1.1" stroke-linejoin="round"/>
<polygon points="583.1,480.1 609.5,507.4 609.1,526.9 575.0,491.4" fill="url(#kfg)" stroke="#111" stroke-width="1.1" stroke-linejoin="round"/>
<polygon points="609.5,507.4 629.5,496.1 641.6,508.4 609.1,526.9" fill="url(#krg)" stroke="#111" stroke-width="1.1" stroke-linejoin="round"/>
<polygon points="583.1,480.1 609.5,507.4 629.5,496.1 603.0,469.0" fill="#8f8a81" stroke="#111" stroke-width="1.1" stroke-linejoin="round"/>
<polygon points="618.8,517.0 630.2,528.8 629.8,548.5 610.4,528.3" fill="url(#kfg)" stroke="#111" stroke-width="1.1" stroke-linejoin="round"/>
<polygon points="630.2,528.8 650.4,517.3 662.4,529.7 629.8,548.5" fill="url(#krg)" stroke="#111" stroke-width="1.1" stroke-linejoin="round"/>
<polygon points="618.8,517.0 630.2,528.8 650.4,517.3 638.9,505.6" fill="#8f8a81" stroke="#111" stroke-width="1.1" stroke-linejoin="round"/>
<polygon points="639.9,538.8 651.6,550.8 651.1,570.7 631.3,550.1" fill="url(#kfg)" stroke="#111" stroke-width="1.1" stroke-linejoin="round"/>
<polygon points="651.6,550.8 671.9,539.1 683.9,551.6 651.1,570.7" fill="url(#krg)" stroke="#111" stroke-width="1.1" stroke-linejoin="round"/>
<polygon points="639.9,538.8 651.6,550.8 671.9,539.1 660.1,527.2" fill="#8f8a81" stroke="#111" stroke-width="1.1" stroke-linejoin="round"/>
<polygon points="661.5,561.1 673.4,573.3 672.8,593.3 652.7,572.4" fill="url(#kfg)" stroke="#111" stroke-width="1.1" stroke-linejoin="round"/>
<polygon points="673.4,573.3 693.7,561.4 705.8,573.9 672.8,593.3" fill="url(#krg)" stroke="#111" stroke-width="1.1" stroke-linejoin="round"/>
<polygon points="661.5,561.1 673.4,573.3 693.7,561.4 681.8,549.3" fill="#8f8a81" stroke="#111" stroke-width="1.1" stroke-linejoin="round"/>
<polygon points="683.5,583.7 695.6,596.2 695.0,616.4 674.5,595.0" fill="url(#kfg)" stroke="#111" stroke-width="1.1" stroke-linejoin="round"/>
<polygon points="695.6,596.2 716.0,584.1 728.1,596.6 695.0,616.4" fill="url(#krg)" stroke="#111" stroke-width="1.1" stroke-linejoin="round"/>
<polygon points="683.5,583.7 695.6,596.2 716.0,584.1 703.9,571.7" fill="#8f8a81" stroke="#111" stroke-width="1.1" stroke-linejoin="round"/>
<polygon points="705.9,606.8 718.2,619.6 717.5,639.9 696.6,618.1" fill="url(#kfg)" stroke="#111" stroke-width="1.1" stroke-linejoin="round"/>
<polygon points="718.2,619.6 738.8,607.3 750.8,619.8 717.5,639.9" fill="url(#krg)" stroke="#111" stroke-width="1.1" stroke-linejoin="round"/>
<polygon points="705.9,606.8 718.2,619.6 738.8,607.3 726.4,594.6" fill="#8f8a81" stroke="#111" stroke-width="1.1" stroke-linejoin="round"/>
<polygon points="728.7,630.4 741.3,643.4 740.5,663.9 719.2,641.7" fill="url(#kfg)" stroke="#111" stroke-width="1.1" stroke-linejoin="round"/>
<polygon points="741.3,643.4 761.9,630.8 774.0,643.4 740.5,663.9" fill="url(#krg)" stroke="#111" stroke-width="1.1" stroke-linejoin="round"/>
<polygon points="728.7,630.4 741.3,643.4 761.9,630.8 749.3,618.0" fill="#8f8a81" stroke="#111" stroke-width="1.1" stroke-linejoin="round"/>
<polygon points="751.9,654.4 764.8,667.6 764.0,688.3 742.2,665.7" fill="url(#kfg)" stroke="#111" stroke-width="1.1" stroke-linejoin="round"/>
<polygon points="764.8,667.6 785.5,654.9 797.6,667.5 764.0,688.3" fill="url(#krg)" stroke="#111" stroke-width="1.1" stroke-linejoin="round"/>
<polygon points="751.9,654.4 764.8,667.6 785.5,654.9 772.6,641.8" fill="#8f8a81" stroke="#111" stroke-width="1.1" stroke-linejoin="round"/>
<polygon points="775.7,678.9 788.8,692.4 787.9,713.2 765.7,690.2" fill="url(#kfg)" stroke="#111" stroke-width="1.1" stroke-linejoin="round"/>
<polygon points="788.8,692.4 809.6,679.4 821.6,692.0 787.9,713.2" fill="url(#krg)" stroke="#111" stroke-width="1.1" stroke-linejoin="round"/>
<polygon points="775.7,678.9 788.8,692.4 809.6,679.4 796.5,666.0" fill="#8f8a81" stroke="#111" stroke-width="1.1" stroke-linejoin="round"/>
<polygon points="799.9,703.8 813.2,717.6 812.2,738.6 789.6,715.1" fill="url(#kfg)" stroke="#111" stroke-width="1.1" stroke-linejoin="round"/>
<polygon points="813.2,717.6 834.2,704.4 846.2,717.0 812.2,738.6" fill="url(#krg)" stroke="#111" stroke-width="1.1" stroke-linejoin="round"/>
<polygon points="799.9,703.8 813.2,717.6 834.2,704.4 820.8,690.7" fill="#8f8a81" stroke="#111" stroke-width="1.1" stroke-linejoin="round"/>
<polygon points="824.5,729.3 838.2,743.3 837.1,764.6 814.1,740.6" fill="url(#kfg)" stroke="#111" stroke-width="1.1" stroke-linejoin="round"/>
<polygon points="838.2,743.3 859.2,729.9 871.2,742.6 837.1,764.6" fill="url(#krg)" stroke="#111" stroke-width="1.1" stroke-linejoin="round"/>
<polygon points="824.5,729.3 838.2,743.3 859.2,729.9 845.5,716.0" fill="#8f8a81" stroke="#111" stroke-width="1.1" stroke-linejoin="round"/>
<polygon points="849.7,755.3 863.6,769.6 862.5,791.0 839.0,766.5" fill="url(#kfg)" stroke="#111" stroke-width="1.1" stroke-linejoin="round"/>
<polygon points="863.6,769.6 884.8,755.9 896.7,768.6 862.5,791.0" fill="url(#krg)" stroke="#111" stroke-width="1.1" stroke-linejoin="round"/>
<polygon points="849.7,755.3 863.6,769.6 884.8,755.9 870.8,741.7" fill="#8f8a81" stroke="#111" stroke-width="1.1" stroke-linejoin="round"/>
<polygon points="875.4,781.8 889.6,796.4 888.4,818.0 864.4,793.0" fill="url(#kfg)" stroke="#111" stroke-width="1.1" stroke-linejoin="round"/>
<polygon points="889.6,796.4 910.8,782.4 922.8,795.2 888.4,818.0" fill="url(#krg)" stroke="#111" stroke-width="1.1" stroke-linejoin="round"/>
<polygon points="875.4,781.8 889.6,796.4 910.8,782.4 896.6,768.0" fill="#8f8a81" stroke="#111" stroke-width="1.1" stroke-linejoin="round"/>
<polygon points="935.0,843.4 950.4,859.1 948.9,881.2 923.3,854.6" fill="url(#kfg)" stroke="#111" stroke-width="1.1" stroke-linejoin="round"/>
<polygon points="950.4,859.1 971.8,844.5 983.7,857.3 948.9,881.2" fill="url(#krg)" stroke="#111" stroke-width="1.1" stroke-linejoin="round"/>
<polygon points="935.0,843.4 950.4,859.1 971.8,844.5 956.5,828.9" fill="#8f8a81" stroke="#111" stroke-width="1.1" stroke-linejoin="round"/>
<polygon points="550.3,497.3 587.8,536.8 587.5,556.5 542.4,508.5" fill="url(#kfg)" stroke="#111" stroke-width="1.1" stroke-linejoin="round"/>
<polygon points="587.8,536.8 607.0,525.8 619.3,538.2 587.5,556.5" fill="url(#krg)" stroke="#111" stroke-width="1.1" stroke-linejoin="round"/>
<polygon points="550.3,497.3 587.8,536.8 607.0,525.8 569.4,486.7" fill="#8f8a81" stroke="#111" stroke-width="1.1" stroke-linejoin="round"/>
<polygon points="597.9,547.5 609.4,559.6 609.0,579.5 589.6,558.8" fill="url(#kfg)" stroke="#111" stroke-width="1.1" stroke-linejoin="round"/>
<polygon points="609.4,559.6 628.8,548.5 641.1,560.9 609.0,579.5" fill="url(#krg)" stroke="#111" stroke-width="1.1" stroke-linejoin="round"/>
<polygon points="597.9,547.5 609.4,559.6 628.8,548.5 617.2,536.5" fill="#8f8a81" stroke="#111" stroke-width="1.1" stroke-linejoin="round"/>
<polygon points="619.2,569.9 630.9,582.3 630.4,602.3 610.6,581.2" fill="url(#kfg)" stroke="#111" stroke-width="1.1" stroke-linejoin="round"/>
<polygon points="630.9,582.3 650.3,570.9 662.6,583.4 630.4,602.3" fill="url(#krg)" stroke="#111" stroke-width="1.1" stroke-linejoin="round"/>
<polygon points="619.2,569.9 630.9,582.3 650.3,570.9 638.6,558.7" fill="#8f8a81" stroke="#111" stroke-width="1.1" stroke-linejoin="round"/>
<polygon points="640.8,592.7 652.7,605.3 652.2,625.5 632.0,604.0" fill="url(#kfg)" stroke="#111" stroke-width="1.1" stroke-linejoin="round"/>
<polygon points="652.7,605.3 672.3,593.8 684.6,606.3 652.2,625.5" fill="url(#krg)" stroke="#111" stroke-width="1.1" stroke-linejoin="round"/>
<polygon points="640.8,592.7 652.7,605.3 672.3,593.8 660.3,581.3" fill="#8f8a81" stroke="#111" stroke-width="1.1" stroke-linejoin="round"/>
<polygon points="662.8,616.0 675.0,628.8 674.4,649.1 653.8,627.2" fill="url(#kfg)" stroke="#111" stroke-width="1.1" stroke-linejoin="round"/>
<polygon points="675.0,628.8 694.6,617.1 707.0,629.6 674.4,649.1" fill="url(#krg)" stroke="#111" stroke-width="1.1" stroke-linejoin="round"/>
<polygon points="662.8,616.0 675.0,628.8 694.6,617.1 682.4,604.4" fill="#8f8a81" stroke="#111" stroke-width="1.1" stroke-linejoin="round"/>
<polygon points="685.3,639.7 697.7,652.7 697.0,673.3 676.1,650.9" fill="url(#kfg)" stroke="#111" stroke-width="1.1" stroke-linejoin="round"/>
<polygon points="697.7,652.7 717.4,640.8 729.7,653.4 697.0,673.3" fill="url(#krg)" stroke="#111" stroke-width="1.1" stroke-linejoin="round"/>
<polygon points="685.3,639.7 697.7,652.7 717.4,640.8 705.0,627.8" fill="#8f8a81" stroke="#111" stroke-width="1.1" stroke-linejoin="round"/>
<polygon points="708.2,663.8 720.8,677.1 720.1,697.8 698.7,675.1" fill="url(#kfg)" stroke="#111" stroke-width="1.1" stroke-linejoin="round"/>
<polygon points="720.8,677.1 740.7,665.0 753.0,677.6 720.1,697.8" fill="url(#krg)" stroke="#111" stroke-width="1.1" stroke-linejoin="round"/>
<polygon points="708.2,663.8 720.8,677.1 740.7,665.0 728.0,651.8" fill="#8f8a81" stroke="#111" stroke-width="1.1" stroke-linejoin="round"/>
<polygon points="731.5,688.5 744.4,702.0 743.6,722.9 721.8,699.7" fill="url(#kfg)" stroke="#111" stroke-width="1.1" stroke-linejoin="round"/>
<polygon points="744.4,702.0 764.4,689.7 776.7,702.3 743.6,722.9" fill="url(#krg)" stroke="#111" stroke-width="1.1" stroke-linejoin="round"/>
<polygon points="731.5,688.5 744.4,702.0 764.4,689.7 751.4,676.2" fill="#8f8a81" stroke="#111" stroke-width="1.1" stroke-linejoin="round"/>
<polygon points="755.3,713.6 768.5,727.4 767.6,748.5 745.4,724.8" fill="url(#kfg)" stroke="#111" stroke-width="1.1" stroke-linejoin="round"/>
<polygon points="768.5,727.4 788.5,714.8 800.8,727.5 767.6,748.5" fill="url(#krg)" stroke="#111" stroke-width="1.1" stroke-linejoin="round"/>
<polygon points="755.3,713.6 768.5,727.4 788.5,714.8 775.3,701.1" fill="#8f8a81" stroke="#111" stroke-width="1.1" stroke-linejoin="round"/>
<polygon points="779.6,739.2 793.0,753.3 792.1,774.6 769.4,750.4" fill="url(#kfg)" stroke="#111" stroke-width="1.1" stroke-linejoin="round"/>
<polygon points="793.0,753.3 813.2,740.5 825.5,753.2 792.1,774.6" fill="url(#krg)" stroke="#111" stroke-width="1.1" stroke-linejoin="round"/>
<polygon points="779.6,739.2 793.0,753.3 813.2,740.5 799.7,726.5" fill="#8f8a81" stroke="#111" stroke-width="1.1" stroke-linejoin="round"/>
<polygon points="804.4,765.4 818.1,779.8 817.1,801.2 793.9,776.6" fill="url(#kfg)" stroke="#111" stroke-width="1.1" stroke-linejoin="round"/>
<polygon points="818.1,779.8 838.3,766.7 850.6,779.4 817.1,801.2" fill="url(#krg)" stroke="#111" stroke-width="1.1" stroke-linejoin="round"/>
<polygon points="804.4,765.4 818.1,779.8 838.3,766.7 824.6,752.4" fill="#8f8a81" stroke="#111" stroke-width="1.1" stroke-linejoin="round"/>
<polygon points="829.7,792.0 843.7,806.8 842.6,828.4 818.9,803.3" fill="url(#kfg)" stroke="#111" stroke-width="1.1" stroke-linejoin="round"/>
<polygon points="843.7,806.8 864.0,793.4 876.3,806.2 842.6,828.4" fill="url(#krg)" stroke="#111" stroke-width="1.1" stroke-linejoin="round"/>
<polygon points="829.7,792.0 843.7,806.8 864.0,793.4 850.0,778.9" fill="#8f8a81" stroke="#111" stroke-width="1.1" stroke-linejoin="round"/>
<polygon points="853.3,816.9 889.4,855.0 888.2,877.0 842.3,828.1" fill="url(#kfg)" stroke="#111" stroke-width="1.1" stroke-linejoin="round"/>
<polygon points="889.4,855.0 909.9,841.2 922.1,854.0 888.2,877.0" fill="url(#krg)" stroke="#111" stroke-width="1.1" stroke-linejoin="round"/>
<polygon points="853.3,816.9 889.4,855.0 909.9,841.2 873.6,803.5" fill="#8f8a81" stroke="#111" stroke-width="1.1" stroke-linejoin="round"/>
<polygon points="901.4,867.7 915.7,882.7 914.4,905.0 889.8,878.8" fill="url(#kfg)" stroke="#111" stroke-width="1.1" stroke-linejoin="round"/>
<polygon points="915.7,882.7 936.3,868.7 948.5,881.6 914.4,905.0" fill="url(#krg)" stroke="#111" stroke-width="1.1" stroke-linejoin="round"/>
<polygon points="901.4,867.7 915.7,882.7 936.3,868.7 921.9,853.8" fill="#8f8a81" stroke="#111" stroke-width="1.1" stroke-linejoin="round"/>
<polygon points="557.8,575.3 561.6,579.4 589.1,563.6 585.3,559.5" fill="#3e3c38" stroke="none" stroke-width="1.1" stroke-linejoin="round"/>
<polygon points="579.7,599.0 583.5,603.2 611.2,587.2 607.3,583.0" fill="#3e3c38" stroke="none" stroke-width="1.1" stroke-linejoin="round"/>
<polygon points="794.7,832.6 796.8,834.9 825.8,815.9 823.7,813.7" fill="#3e3c38" stroke="none" stroke-width="1.1" stroke-linejoin="round"/>
<polygon points="820.2,860.3 818.2,867.7 853.9,843.9 849.3,841.0" fill="#3e3c38" stroke="none" stroke-width="1.1" stroke-linejoin="round"/>
<polygon points="540.8,556.8 557.8,575.3 558.8,609.3 541.8,590.8" fill="#6b6964" stroke="#111" stroke-width="1.0" stroke-linejoin="round"/>
<polyline points="541.3,569.8 558.3,588.3" fill="none" stroke="#111" stroke-width="0.9"/>
<polygon points="540.8,556.8 557.8,575.3 585.3,559.5 568.1,541.2" fill="#8f8a81" stroke="#111" stroke-width="1.1" stroke-linejoin="round"/>
<polygon points="561.6,579.4 579.7,599.0 580.7,633.0 562.6,613.4" fill="#6b6964" stroke="#111" stroke-width="1.0" stroke-linejoin="round"/>
<polyline points="562.1,592.4 580.2,612.0" fill="none" stroke="#111" stroke-width="0.9"/>
<polygon points="561.6,579.4 579.7,599.0 607.3,583.0 589.1,563.6" fill="#8f8a81" stroke="#111" stroke-width="1.1" stroke-linejoin="round"/>
<polygon points="583.5,603.2 794.7,832.6 795.7,866.6 584.5,637.2" fill="#6b6964" stroke="#111" stroke-width="1.0" stroke-linejoin="round"/>
<polyline points="584.0,616.2 795.2,845.6" fill="none" stroke="#111" stroke-width="0.9"/>
<polygon points="583.5,603.2 794.7,832.6 823.7,813.7 611.2,587.2" fill="#8f8a81" stroke="#111" stroke-width="1.1" stroke-linejoin="round"/>
<polygon points="796.8,834.9 820.2,860.3 821.2,894.3 797.8,868.9" fill="#6b6964" stroke="#111" stroke-width="1.0" stroke-linejoin="round"/>
<polyline points="797.3,847.9 820.7,873.3" fill="none" stroke="#111" stroke-width="0.9"/>
<polygon points="796.8,834.9 820.2,860.3 849.3,841.0 825.8,815.9" fill="#8f8a81" stroke="#111" stroke-width="1.1" stroke-linejoin="round"/>
</svg></div>
<!-- top black bar -->
<div class="a" style="left:0;top:0;width:1920px;height:8px;background:#000"></div>
<div class="a" style="left:1920px;top:26px;width:8px;height:1030px;background:#f7f7f7"></div>
<!-- title bar -->
<div class="a" style="left:0;top:8px;width:1920px;height:23px;background:#fff"></div>
<svg style="left:2px;top:11px" width="16" height="16" viewBox="0 0 16 16"><rect x="0" y="0" width="16" height="16" fill="#fbe3c8"/><path d="M5 3h7v3H8v2h3v2.5H8V13H5z" fill="#d9781c"/><path d="M5 3h7v1.5H6.5V13H5z" fill="#f0a050"/><rect x="10" y="12" width="4" height="2" fill="#f4b070"/></svg>
<svg style="left:1798px;top:17px" width="12" height="2"><rect width="11" height="1.2" fill="#111"/></svg>
<svg style="left:1843px;top:13px" width="12" height="11" viewBox="0 0 12 11"><path d="M2.5 2.5V0.5h8.5v8h-2" fill="none" stroke="#111" stroke-width="1.1"/><rect x="0.5" y="2.5" width="8" height="8" fill="none" stroke="#111" stroke-width="1.1"/></svg>
<svg style="left:1889px;top:13px" width="11" height="11" viewBox="0 0 11 11"><path d="M0.5 0.5L10.5 10.5M10.5 0.5L0.5 10.5" stroke="#111" stroke-width="1.2"/></svg>
<!-- toolbar -->
<div class="a" style="left:0;top:31px;width:1920px;height:32px;background:#cacaca"></div>
<svg style="left:9px;top:40px" width="14" height="14" viewBox="0 0 14 14" fill="#666"><rect x="0" y="0" width="4" height="4" rx=".6"/><rect x="5" y="0" width="4" height="4" rx=".6"/><rect x="10" y="0" width="4" height="4" rx=".6"/><rect x="0" y="5" width="4" height="4" rx=".6"/><rect x="5" y="5" width="4" height="4" rx=".6"/><rect x="10" y="5" width="4" height="4" rx=".6"/><rect x="0" y="10" width="4" height="4" rx=".6"/><rect x="5" y="10" width="4" height="4" rx=".6"/><rect x="10" y="10" width="4" height="4" rx=".6"/></svg>
<svg style="left:42px;top:39px" width="14" height="16" viewBox="0 0 14 16"><path d="M0.5 0.5h8v4h4.5v11h-12.5z" fill="#666"/><path d="M10 0.5l3 3h-3z" fill="#666"/></svg>
<svg style="left:61px;top:44px" width="8" height="6"><path d="M0 0h7l-3.5 5z" fill="#666"/></svg>
<svg style="left:87px;top:40px" width="14" height="14" viewBox="0 0 14 14"><path d="M1 0h12a1 1 0 0 1 1 1v12a1 1 0 0 1-1 1H2l-2-2V1a1 1 0 0 1 1-1z" fill="#666"/><rect x="3.5" y="1.5" width="7" height="4" fill="#cacaca"/><rect x="5" y="1.5" width="4" height="2.5" fill="#666"/><rect x="3.5" y="8.5" width="7" height="5.5" fill="#cacaca"/><rect x="5" y="10" width="4" height="4" fill="#666"/></svg>
<svg style="left:120px;top:41px" width="14" height="13" viewBox="0 0 14 13"><path d="M13 12.5C13 7 9.5 5 4 5.5" fill="none" stroke="#666" stroke-width="2.2"/><path d="M0 5.5L5 0.5V10.5z" fill="#666"/></svg>
<svg style="left:140px;top:45px" width="8" height="6"><path d="M0 0h7l-3.5 5z" fill="#666"/></svg>
<svg style="left:160px;top:41px" width="14" height="13" viewBox="0 0 14 13"><path d="M1 12.5C1 7 4.5 5 10 5.5" fill="none" stroke="#999" stroke-width="2.2"/><path d="M14 5.5L9 0.5V10.5z" fill="#999"/></svg>
<svg style="left:179px;top:45px" width="8" height="6"><path d="M0 0h7l-3.5 5z" fill="#999"/></svg>
<!-- tabs -->
<div class="a" style="left:194px;top:35px;width:708px;height:28px;background:#bbbbbb;border-radius:4px 4px 0 0"></div>
<svg style="left:488px;top:42px" width="15" height="15" viewBox="0 0 15 15"><path d="M1 3.5L5.5 1H14V10.5L10.5 14H1z" fill="#9a9a9a"/><path d="M1 3.5h9.5V14H1z" fill="#aaa"/><path d="M10.5 3.5L14 1V10.5L10.5 14z" fill="#8a8a8a"/><path d="M1 3.5L5.5 1H14L10.5 3.5z" fill="#c4c4c4"/></svg>
<svg style="left:887px;top:45px" width="9" height="9" viewBox="0 0 9 9"><path d="M0.5 0.5L8.5 8.5M8.5 0.5L0.5 8.5" stroke="#777" stroke-width="1.3"/></svg>
<div class="a" style="left:906px;top:35px;width:708px;height:28px;background:#f1f1f1;border-radius:4px 4px 0 0"></div>
<svg style="left:1211px;top:41px" width="16" height="16" viewBox="0 0 16 16"><path d="M1 3.5L5.5 1H15V11L11 15H1z" fill="#666"/><path d="M1 3.5h10V15H1z" fill="#8a8a8a"/><path d="M11 3.5L15 1V11L11 15z" fill="#5a5a5a"/><path d="M1 3.5L5.5 1H15L11 3.5z" fill="#b0b0b0"/></svg>
<svg style="left:1599px;top:45px" width="9" height="9" viewBox="0 0 9 9"><path d="M0.5 0.5L8.5 8.5M8.5 0.5L0.5 8.5" stroke="#666" stroke-width="1.3"/></svg>
<div class="a" style="left:1618px;top:35px;width:28px;height:28px;background:#b9b9b9;border-radius:4px 4px 0 0"></div>
<svg style="left:1626px;top:42px" width="13" height="13" viewBox="0 0 13 13"><path d="M6.5 0V13M0 6.5H13" stroke="#7a7a7a" stroke-width="2.6"/></svg>
<svg style="left:1658px;top:40px" width="17" height="16" viewBox="0 0 17 16"><path d="M0 0h16v11h-3v4l-4-4H0z" fill="#666"/><path d="M2 3h12M2 5.5h12M2 8h8" stroke="#cacaca" stroke-width="1"/></svg>
<svg style="left:1691px;top:39px" width="17" height="17" viewBox="0 0 17 17"><path d="M0 0h9l4 4v3L6 14v2H0z" fill="#666"/><path d="M9 0l4 4H9z" fill="#cacaca"/><path d="M7 14l8-8 2 2-8 8H7z" fill="#666" stroke="#cacaca" stroke-width="0.8"/></svg>
<svg style="left:1764px;top:39px" width="17" height="17" viewBox="0 0 17 17"><circle cx="8.5" cy="8.5" r="7.5" fill="none" stroke="#666" stroke-width="1.6"/><circle cx="8.5" cy="8.5" r="5.6" fill="none" stroke="#666" stroke-width="0.8"/><path d="M8.5 4v4.8h3.5" fill="none" stroke="#666" stroke-width="1.5"/></svg>
<svg style="left:1813px;top:39px" width="15" height="17" viewBox="0 0 15 17"><path d="M7.5 1C4 1 3 4 3 7v4L1 13h13l-2-2V7c0-3-1-6-4.5-6z" fill="#666"/><path d="M5.5 14.5a2 2 0 0 0 4 0z" fill="#666"/></svg>
<svg style="left:1845px;top:39px" width="17" height="17" viewBox="0 0 17 17"><circle cx="8.5" cy="8.5" r="8.5" fill="#666"/><path d="M5.8 6.3a2.7 2.7 0 1 1 4.2 2.2c-1 .7-1.5 1-1.5 2.3" fill="none" stroke="#cacaca" stroke-width="2"/><rect x="7.5" y="12" width="2" height="2" fill="#cacaca"/></svg>
<div class="a" style="left:1882px;top:35px;width:25px;height:25px;border-radius:50%;background:#ececec"></div>
<!-- ribbon -->
<div class="a" style="left:0;top:63px;width:1920px;height:82px;background:#f2f2f2;border-bottom:1px solid #dcdcdc"></div>
<div class="a" style="left:12px;top:73px;width:109px;height:61px;border:2px solid #dcdcdc;border-radius:6px"></div>
<svg style="left:85px;top:102px" width="7" height="5"><path d="M0 0h6l-3 4z" fill="#333"/></svg>
<div class="a" style="left:139px;top:84px;width:56px;height:3px;background:#0696d7;border-radius:1px"></div>
<svg style="left:0;top:0" width="1" height="1"><defs><path id="dd" d="M0 0h6l-3 4z" fill="#333"/></defs></svg>
<svg style="left:245px;top:133px" width="7" height="5"><path d="M0 0h6l-3 4z" fill="#333"/></svg>
<svg style="left:493px;top:133px" width="7" height="5"><path d="M0 0h6l-3 4z" fill="#333"/></svg>
<svg style="left:686px;top:133px" width="7" height="5"><path d="M0 0h6l-3 4z" fill="#333"/></svg>
<svg style="left:756px;top:133px" width="7" height="5"><path d="M0 0h6l-3 4z" fill="#333"/></svg>
<svg style="left:814px;top:133px" width="7" height="5"><path d="M0 0h6l-3 4z" fill="#333"/></svg>
<svg style="left:874px;top:133px" width="7" height="5"><path d="M0 0h6l-3 4z" fill="#333"/></svg>
<svg style="left:932px;top:133px" width="7" height="5"><path d="M0 0h6l-3 4z" fill="#333"/></svg>
<div class="a" style="left:351px;top:90px;width:2px;height:49px;background:#dedede"></div>
<div class="a" style="left:619px;top:90px;width:2px;height:49px;background:#dedede"></div>
<div class="a" style="left:716px;top:90px;width:2px;height:49px;background:#dedede"></div>
<div class="a" style="left:776px;top:90px;width:2px;height:49px;background:#dedede"></div>
<div class="a" style="left:834px;top:90px;width:2px;height:49px;background:#dedede"></div>
<div class="a" style="left:893px;top:90px;width:2px;height:49px;background:#dedede"></div>

<div class="t" id="ttitle" style="left:23px;top:14px;font-size:12.5px;color:#000;transform:scaleX(0.9222);transform-origin:0 0;">Autodesk Fusion 360 (個人用 - 商用利用不可)</div>
<div class="t" id="ttab1" style="left:508px;top:43px;font-size:12.5px;color:#6a6a6a;transform:scaleX(0.9667);transform-origin:0 0;">MB-H1_open v3</div>
<div class="t" id="ttab2" style="left:1231px;top:43px;font-size:12.5px;color:#333;transform:scaleX(0.9552);transform-origin:0 0;">MB-H1 v36*</div>
<div class="t" id="t1010" style="left:1710px;top:42px;font-size:11.5px;color:#333;transform:scaleX(0.9310);transform-origin:0 0;">10/10</div>
<div class="t" id="tone" style="left:1784px;top:42px;font-size:11.5px;color:#333;">1</div>
<div class="t" id="tgc" style="left:1887px;top:42px;font-size:12px;color:#333;transform:scaleX(0.7222);transform-origin:0 0;">GC</div>
<div class="t" id="tdes" style="left:42px;top:97px;font-size:11.5px;color:#222;font-weight:bold;transform:scaleX(0.7708);transform-origin:0 0;">デザイン</div>
<div class="t" id="tsol" style="left:149px;top:68px;font-size:11px;color:#0696d7;font-weight:bold;transform:scaleX(0.7273);transform-origin:0 0;">ソリッド</div>
<div class="t" id="tsur" style="left:228px;top:68px;font-size:11px;color:#333;transform:scaleX(0.7273);transform-origin:0 0;">サーフェス</div>
<div class="t" id="tfor" style="left:315px;top:68px;font-size:11px;color:#333;transform:scaleX(0.7045);transform-origin:0 0;">フォーム</div>
<div class="t" id="tmes" style="left:393px;top:68px;font-size:11px;color:#333;transform:scaleX(0.6818);transform-origin:0 0;">メッシュ</div>
<div class="t" id="tshe" style="left:466px;top:68px;font-size:11px;color:#333;transform:scaleX(0.7681);transform-origin:0 0;">シート メタル</div>
<div class="t" id="ttoo" style="left:565px;top:68px;font-size:11px;color:#333;transform:scaleX(0.7576);transform-origin:0 0;">ツール</div>
<div class="t" id="tcre" style="left:220px;top:129px;font-size:11px;color:#333;transform:scaleX(0.9545);transform-origin:0 0;">作成</div>
<div class="t" id="tmod" style="left:468px;top:129px;font-size:11px;color:#333;transform:scaleX(0.9091);transform-origin:0 0;">修正</div>
<div class="t" id="tasm" style="left:643px;top:129px;font-size:11px;color:#333;transform:scaleX(0.7091);transform-origin:0 0;">アセンブリ</div>
<div class="t" id="tcst" style="left:730px;top:129px;font-size:11px;color:#333;transform:scaleX(1.0000);transform-origin:0 0;">構築</div>
<div class="t" id="tins" style="left:789px;top:129px;font-size:11px;color:#333;transform:scaleX(1.0000);transform-origin:0 0;">検査</div>
<div class="t" id="tinr" style="left:849px;top:129px;font-size:11px;color:#333;transform:scaleX(0.9091);transform-origin:0 0;">挿入</div>
<div class="t" id="tsel" style="left:907px;top:129px;font-size:11px;color:#333;transform:scaleX(1.0000);transform-origin:0 0;">選択</div>
<svg style="left:0;top:0" width="1000" height="150" viewBox="0 0 1000 150">
<!-- sketch 137-169 x 90-122 -->
<g stroke="#555" stroke-width="1" fill="none"><path d="M138 91.5H167.5M138 91.5V121M138 120.5H155M167.5 91.5V108"/><path d="M145 99.5H158.5M145 99.5V112M158.5 100.5C158 107 153 112 147 112.5"/></g>
<g fill="#555"><rect x="136" y="90" width="3" height="3"/><rect x="166" y="90" width="3" height="3"/><rect x="136" y="119" width="3" height="3"/><rect x="143.5" y="98" width="3" height="3"/><rect x="157" y="98" width="3" height="3"/><rect x="143.5" y="111" width="3" height="3"/></g>
<path d="M159.5 108h4v4.5h4.5v4h-4.5V121h-4v-4.5H155v-4h4.5z" fill="#27a847"/>
<!-- extrude 181-211 -->
<path d="M181 96.5l5.5-5.5h18.5v24.5l-5.5 5.5H181z" fill="#64aee6"/>
<path d="M181 96.5l5.5-5.5h18.5l-5.5 5.5z" fill="#8fcdf7"/>
<path d="M199.5 96.5l5.5-5.5v24.5l-5.5 5.5z" fill="#4a92d0"/>
<path d="M181 118h18.5l5.5-5.5v3l-5.5 6.5H181z" fill="#c3c3c3"/>
<path d="M208.5 116V93" stroke="#333" stroke-width="1.2"/><path d="M206 95l2.5-4.5 2.5 4.5z" fill="#333"/>
<!-- revolve 223-255 -->
<path d="M223 103Q238.9 93 254.2 102.6L248.5 107.8Q238.9 101 228.9 108.7z" fill="#8ecbf7"/>
<path d="M228.9 108.7Q238.9 101 248.5 107.8L248.1 118.2Q238.9 111 228.9 118.7z" fill="#66b0e6"/>
<path d="M223 103L228.9 108.7V118.7L223 113.5z" fill="#4a92d0"/>
<path d="M249.2 109.3L254.8 103.4V112.6L249.2 118.5z" fill="#fff" stroke="#444" stroke-width="0.9"/>
<path d="M252.9 97.5Q239 88 226 96" fill="none" stroke="#333" stroke-width="1"/>
<path d="M223.6 97.6L224.8 93.6L228 96.8z" fill="#222"/>
<!-- hole 266-298 -->
<path d="M266.4 97.5L274.2 90.1H297.7V113.5L290.5 121.5H266.4z" fill="#dedede"/>
<path d="M266.4 97.5L274.2 90.1H297.7L290.5 97.5z" fill="#f0f0f0"/>
<path d="M290.5 97.5L297.7 90.1V113.5L290.5 121.5z" fill="#c2c2c2"/>
<path d="M266.4 97.5L274.2 90.1H297.7V113.5L290.5 121.5H266.4z" fill="none" stroke="#5a5a5a" stroke-width="1"/>
<circle cx="277.9" cy="109.7" r="8.4" fill="#f2f2f2" stroke="#555" stroke-width="0.9"/>
<clipPath id="hcut"><path d="M260 85H305V130H260zM289.9 103.4a7.4 7.4 0 1 0 -14.8 0a7.4 7.4 0 1 0 14.8 0z" clip-rule="evenodd"/></clipPath>
<circle cx="277.9" cy="109.7" r="7" fill="#64aee6" clip-path="url(#hcut)"/>
<!-- pattern 308-338 -->
<path d="M313 95.5H330M311 99V112.5M313 116.5H330" stroke="#444" stroke-width="1"/>
<rect x="308.5" y="92.5" width="6" height="6" fill="#fff" stroke="#444" stroke-width="1"/>
<rect x="330" y="92" width="7" height="7" fill="#5aaae6"/><rect x="308" y="113" width="7" height="7" fill="#5aaae6"/><rect x="330" y="113" width="7" height="7" fill="#5aaae6"/>
<!-- press pull 364-393 -->
<path d="M364.5 97l5-6h7v30.5h-12z" fill="#dcdcdc" stroke="#555" stroke-width="1"/>
<path d="M371 97l5.5-6h8v25l-5.5 5.5H371z" fill="#64aee6"/>
<path d="M379.5 97l5.5-6v25l-5.5 5.5z" fill="#4a92d0"/>
<path d="M384 105.5h7" stroke="#222" stroke-width="1.2"/><path d="M390 103l3.5 2.5-3.5 2.5z" fill="#222"/>
<!-- fillet 406-438 -->
<path d="M406.5 97.5l6.5-6.5h7.5a17 17 0 0 1 17.5 16v8l-6 6H406.5z" fill="#dcdcdc" stroke="#555" stroke-width="1"/>
<path d="M420 91a17 17 0 0 1 18 16.5l-6 5a11 11 0 0 0-12-13.5z" fill="#64aee6"/>
<path d="M432 112.5l6-5v8l-6 6z" fill="#bcbcbc"/>
<!-- shell 449-481 -->
<path d="M449.5 98l7-7h24v23.5l-7 7h-24z" fill="#e6e6e6" stroke="#555" stroke-width="1"/>
<path d="M473.5 98l7-7v23.5l-7 7z" fill="#bdbdbd"/>
<rect x="453" y="101" width="16" height="17" fill="#fff"/>
<path d="M454 102h6.5v9h7.5v6.5H454z" fill="#4a92d0"/><path d="M454 117.5l6.5-6.5h7.5v6.5z" fill="#8fcdf7"/>
<!-- combine 492-524 -->
<path d="M504 97l5-5h15v15l-5 5h-15z" fill="#64aee6"/><path d="M504 97l5-5h15l-5 5z" fill="#8fcdf7"/><path d="M519 97l5-5v15l-5 5z" fill="#4a92d0"/>
<path d="M492 105l3.5-3.5h9v0h15v10h-15v10l-3.5 0h-9z" fill="#64aee6"/><path d="M492 105l3.5-3.5h9l-3.5 3.5z" fill="#8fcdf7"/>
<path d="M492 105h12.5v16.5H492z" fill="#64aee6"/><path d="M504.5 112h15l-5 5h-10z" fill="#64aee6"/><path d="M504.5 112v9.5l-3 0.5" fill="#4a92d0"/>
<!-- split 537-567 -->
<path d="M537 97l5.5-5.5h24.5v14l-5.5 5h-24.5z" fill="#64aee6"/><path d="M537 97l5.5-5.5h24.5l-5.5 5.5z" fill="#8fcdf7"/><path d="M561.5 97l5.5-5.5v12l-5.5 5z" fill="#4a92d0"/>
<path d="M537 108.5h24.5l6-5.5" fill="none" stroke="#2a8ee0" stroke-width="1"/>
<path d="M537.5 112h24v9.5h-24z" fill="#dcdcdc" stroke="#555" stroke-width="1"/><path d="M561.5 112l5.5-5v9l-5.5 5.5z" fill="#bdbdbd"/>
<!-- move 578-609 -->
<path d="M593.5 94V118M581 106H606" stroke="#333" stroke-width="2.4"/>
<path d="M593.5 90.5l-5 6.5h10zM593.5 121.5l-5-6.5h10zM578.5 106l6.5-5v10zM608.5 106l-6.5-5v10z" fill="#333"/>
<!-- new component 631-664 -->
<path d="M631.5 105l3-3h13v19.5h-16z" fill="#dcdcdc" stroke="#555" stroke-width="0.9"/>
<path d="M644.5 110l3-3h13v11.5l-3 3h-13z" fill="#dcdcdc" stroke="#555" stroke-width="0.9"/>
<path d="M631.5 98l3.5-3.5h10v10l-3.5 3.5h-10z" fill="#64aee6"/><path d="M631.5 98l3.5-3.5h10l-3.5 3.5z" fill="#8fcdf7"/>
<path d="M655 91l1.2 4 3.8-1.8-1.8 3.8 4 1.2-4 1.2 1.8 3.8-3.8-1.8-1.2 4-1.2-4-3.8 1.8 1.8-3.8-4-1.2 4-1.2-1.8-3.8 3.8 1.8z" fill="#f5a31a"/>
<!-- joint 676-705 -->
<path d="M677 119V97c0-3 2-5 5-5s5 2 5 5v18l-5 4z" fill="#d0d0d0" stroke="#555" stroke-width="1"/>
<path d="M692 119V104l4-4h2c3 0 6 3 6 6v13l-5-4z" fill="#d0d0d0" stroke="#555" stroke-width="1"/>
<path d="M682 106v8M697 101v6" stroke="#1a8ad8" stroke-width="1.2"/>
<!-- construct 731-762 -->
<path d="M731.5 98l8-7v24l-8 6.5z" fill="#d8d8d8" stroke="#555" stroke-width="1"/>
<path d="M739.5 91l8-0v0l-8 7z" fill="#d8d8d8"/>
<path d="M739 98l8-7v24l-8 6.5z" fill="#54b46a" stroke="#555" stroke-width="0.8"/>
<path d="M753 98l8.5-7v23.5l-8.5 7z" fill="#e3915a"/>
<!-- inspect 791-821 -->
<path d="M791.5 98v10M820.5 98v10M793 102h26" stroke="#333" stroke-width="1"/><path d="M792.5 102l3-2.5v5zM819.5 102l-3-2.5v5z" fill="#333"/>
<rect x="791" y="108" width="30" height="6" fill="#f2a60f"/><path d="M794 108v3M797 108v2M800 108v3M803 108v2M806 108v3M809 108v2M812 108v3M815 108v2M818 108v3" stroke="#8a5a00" stroke-width="0.7"/>
<!-- insert 849-879 -->
<rect x="849" y="91" width="30" height="29" fill="#5aaae6"/><rect x="849" y="91" width="30" height="29" fill="none" stroke="#4a92d0" stroke-width="1"/>
<path d="M850 119v-9c4-5 7-7 10-4s5 4 8 1 6-2 10 2v10z" fill="#3a86c8"/>
<circle cx="872" cy="98" r="3" fill="#fff6b0"/>
<!-- select 905-943 -->
<rect x="905" y="87" width="38" height="38" fill="#0696d7"/>
<rect x="909.5" y="91.5" width="28" height="20" fill="none" stroke="#9fe07a" stroke-width="1" stroke-dasharray="3 2"/>
<path d="M932 102v20l4.5-4.5 3 6.5 2.5-1-3-6.5h6z" fill="#fff"/>
</svg>

<div class="a" style="left:4px;top:149px;width:300px;height:25px;background:#f1f1f1;border:1px solid #c8c8c8"></div>
<svg style="left:9px;top:159px" width="11" height="6" viewBox="0 0 11 6"><path d="M0 3L5 0V6zM5.5 3L10.5 0V6z" fill="#222"/></svg>
<div class="t" id="tbr" style="left:29px;top:155px;font-size:11px;color:#444;transform:scaleX(0.7045);transform-origin:0 0;">ブラウザ</div>
<svg style="left:282px;top:156px" width="11" height="11" viewBox="0 0 11 11"><circle cx="5.5" cy="5.5" r="5.5" fill="#222"/><rect x="2.5" y="4.6" width="6" height="1.8" fill="#fff"/></svg>
<div class="a" style="left:299px;top:156px;width:1px;height:11px;background:#777"></div><div class="a" style="left:301px;top:156px;width:1px;height:11px;background:#aaa"></div>
<div class="a" style="left:8px;top:179px;width:6px;height:817px;background:#c4c4c6;border-radius:3px 3px 0 0"></div>
<div class="a" style="left:8px;top:179px;width:6px;height:132px;background:#9d9d9f;border-radius:3px"></div>
<div class="row" style="left:40px;top:179px;width:148px"></div>
<svg style="left:21px;top:183px" width="12" height="12" viewBox="0 0 12 12"><defs><linearGradient id="tg183" x1="0" x2="1"><stop offset="0" stop-color="#eee"/><stop offset="1" stop-color="#666"/></linearGradient></defs><path d="M0.8 11.2L11.2 0.8V11.2z" fill="url(#tg183)" stroke="#111" stroke-width="1"/></svg>
<svg style="left:43px;top:184px" width="16" height="11" viewBox="0 0 16 11"><path d="M0.5 5.5C3 1.5 5.5 0.5 8 0.5s5 1 7.5 5C13 9.5 10.5 10.5 8 10.5S3 9.5 0.5 5.5z" fill="#999"/><circle cx="8" cy="5.5" r="3" fill="#f0f0f0"/><circle cx="8" cy="5.5" r="1.6" fill="#999"/></svg>
<div class="a" style="left:65px;top:181px;width:98px;height:16px;background:#9b9b9b"></div>
<svg style="left:68px;top:181px" width="16" height="16" viewBox="0 0 16 16"><path d="M1 4.5L4.5 1H15V11.5L11.5 15H1z" fill="#dfe3ea" stroke="#333" stroke-width="1"/><path d="M1 4.5h10.5V15M11.5 4.5L15 1" fill="none" stroke="#888" stroke-width="0.7"/></svg>
<div class="t" id="tmb" style="left:98px;top:184px;font-size:11.5px;color:#fff;font-weight:bold;transform:scaleX(0.9322);transform-origin:0 0;">MB-H1 v36</div>
<svg style="left:167px;top:183px" width="13" height="13" viewBox="0 0 13 13"><circle cx="6.5" cy="6.5" r="5.8" fill="#fff" stroke="#222" stroke-width="1.2"/><circle cx="6.5" cy="6.5" r="2.3" fill="#222"/></svg>
<div class="row" style="left:58px;top:203px;width:118px"></div>
<svg style="left:40px;top:207px" width="10" height="13" viewBox="0 0 10 13"><path d="M1 1L9 6.5L1 12z" fill="#eee" stroke="#111" stroke-width="1.2" stroke-linejoin="round"/></svg>
<svg style="left:61px;top:205px" width="16" height="16" viewBox="0 0 16 16"><path d="M6.8 0h2.4l.4 2.2 1.5.6 1.8-1.3 1.7 1.7-1.3 1.8.6 1.5 2.2.4v2.4l-2.2.4-.6 1.5 1.3 1.8-1.7 1.7-1.8-1.3-1.5.6-.4 2.2H6.8l-.4-2.2-1.5-.6-1.8 1.3-1.7-1.7 1.3-1.8-.6-1.5L0 9.2V6.8l2.2-.4.6-1.5-1.3-1.8 1.7-1.7 1.8 1.3 1.5-.6z" fill="#9a9a9a"/><circle cx="8" cy="8" r="2.6" fill="#f0f0f0"/></svg>
<div class="t" id="tdoc" style="left:91px;top:207px;font-size:11.5px;color:#222;transform:scaleX(0.7130);transform-origin:0 0;">ドキュメントの設定</div>
<div class="row" style="left:58px;top:227px;width:90px"></div>
<svg style="left:40px;top:231px" width="10" height="13" viewBox="0 0 10 13"><path d="M1 1L9 6.5L1 12z" fill="#eee" stroke="#111" stroke-width="1.2" stroke-linejoin="round"/></svg>
<svg style="left:61px;top:231px" width="16" height="13" viewBox="0 0 16 13"><path d="M0 0h6l1.5 1.5H16V13H0z" fill="#9a9a9a"/><path d="M0 2.5h16" stroke="#f0f0f0" stroke-width="0.8"/></svg>
<div class="t" id="tview" style="left:90px;top:231px;font-size:11.5px;color:#222;transform:scaleX(0.7500);transform-origin:0 0;">ビュー管理</div>
<div class="row" style="left:58px;top:251px;width:91px"></div>
<svg style="left:40px;top:255px" width="10" height="13" viewBox="0 0 10 13"><path d="M1 1L9 6.5L1 12z" fill="#eee" stroke="#111" stroke-width="1.2" stroke-linejoin="round"/></svg>
<svg style="left:61px;top:256px" width="16" height="11" viewBox="0 0 16 11"><path d="M0.5 5.5C3 1.5 5.5 0.5 8 0.5s5 1 7.5 5C13 9.5 10.5 10.5 8 10.5S3 9.5 0.5 5.5z" fill="#d0d0d0"/><circle cx="8" cy="5.5" r="3" fill="#f0f0f0"/><circle cx="8" cy="5.5" r="1.6" fill="#d0d0d0"/><path d="M2 10L14 1" stroke="#d0d0d0" stroke-width="1.2"/></svg>
<svg style="left:86px;top:255px" width="16" height="13" viewBox="0 0 16 13"><path d="M0 0h6l1.5 1.5H16V13H0z" fill="#9a9a9a"/><path d="M0 2.5h16" stroke="#f0f0f0" stroke-width="0.8"/></svg>
<div class="t" id="torg" style="left:115px;top:255px;font-size:11.5px;color:#222;transform:scaleX(0.8750);transform-origin:0 0;">原点</div>
<div class="row" style="left:58px;top:275px;width:91px"></div>
<svg style="left:39px;top:279px" width="12" height="12" viewBox="0 0 12 12"><defs><linearGradient id="tg279" x1="0" x2="1"><stop offset="0" stop-color="#eee"/><stop offset="1" stop-color="#666"/></linearGradient></defs><path d="M0.8 11.2L11.2 0.8V11.2z" fill="url(#tg279)" stroke="#111" stroke-width="1"/></svg>
<svg style="left:61px;top:280px" width="16" height="11" viewBox="0 0 16 11"><path d="M0.5 5.5C3 1.5 5.5 0.5 8 0.5s5 1 7.5 5C13 9.5 10.5 10.5 8 10.5S3 9.5 0.5 5.5z" fill="#999"/><circle cx="8" cy="5.5" r="3" fill="#f0f0f0"/><circle cx="8" cy="5.5" r="1.6" fill="#999"/></svg>
<svg style="left:86px;top:279px" width="16" height="13" viewBox="0 0 16 13"><path d="M0 0h6l1.5 1.5H16V13H0z" fill="#9a9a9a"/><path d="M0 2.5h16" stroke="#f0f0f0" stroke-width="0.8"/></svg>
<div class="t" id="tbod" style="left:115px;top:279px;font-size:11.5px;color:#222;transform:scaleX(0.6667);transform-origin:0 0;">ボディ</div>
<div class="row" style="left:76px;top:299px;width:98px"></div>
<svg style="left:79px;top:304px" width="16" height="11" viewBox="0 0 16 11"><path d="M0.5 5.5C3 1.5 5.5 0.5 8 0.5s5 1 7.5 5C13 9.5 10.5 10.5 8 10.5S3 9.5 0.5 5.5z" fill="#999"/><circle cx="8" cy="5.5" r="3" fill="#f0f0f0"/><circle cx="8" cy="5.5" r="1.6" fill="#999"/></svg>
<svg style="left:104px;top:301px" width="16" height="16" viewBox="0 0 16 16"><defs><linearGradient id="bg301" x1="0" x2="1"><stop offset="0" stop-color="#fff"/><stop offset="1" stop-color="#b8bcc4"/></linearGradient></defs><rect x="1" y="0.8" width="14" height="14.4" rx="3" fill="url(#bg301)" stroke="#3a3f4a" stroke-width="1.1"/><path d="M1.5 3.5C4 5 12 5 14.5 3.5" fill="none" stroke="#3a3f4a" stroke-width="0.7"/></svg>
<div class="t" id="tb4" style="left:133px;top:303px;font-size:11.5px;color:#222;transform:scaleX(0.6667);transform-origin:0 0;">ボディ</div>
<div class="t" id="tbn4" style="left:157px;top:303px;font-size:11.5px;color:#222;">4</div>
<div class="row" style="left:76px;top:323px;width:102px"></div>
<svg style="left:79px;top:328px" width="16" height="11" viewBox="0 0 16 11"><path d="M0.5 5.5C3 1.5 5.5 0.5 8 0.5s5 1 7.5 5C13 9.5 10.5 10.5 8 10.5S3 9.5 0.5 5.5z" fill="#999"/><circle cx="8" cy="5.5" r="3" fill="#f0f0f0"/><circle cx="8" cy="5.5" r="1.6" fill="#999"/></svg>
<div class="a" style="left:101px;top:323px;width:77px;height:20px;background:#0696d7"></div>
<svg style="left:104px;top:325px" width="16" height="16" viewBox="0 0 16 16"><defs><linearGradient id="bg325" x1="0" x2="1"><stop offset="0" stop-color="#fff"/><stop offset="1" stop-color="#b8bcc4"/></linearGradient></defs><rect x="1" y="0.8" width="14" height="14.4" rx="3" fill="url(#bg325)" stroke="#3a3f4a" stroke-width="1.1"/><path d="M1.5 3.5C4 5 12 5 14.5 3.5" fill="none" stroke="#3a3f4a" stroke-width="0.7"/></svg>
<div class="t" id="tb13" style="left:133px;top:327px;font-size:11.5px;color:#fff;transform:scaleX(0.6667);transform-origin:0 0;">ボディ</div>
<div class="t" id="tbn13" style="left:157px;top:327px;font-size:11.5px;color:#fff;">13</div>
<div class="row" style="left:76px;top:347px;width:102px"></div>
<svg style="left:79px;top:352px" width="16" height="11" viewBox="0 0 16 11"><path d="M0.5 5.5C3 1.5 5.5 0.5 8 0.5s5 1 7.5 5C13 9.5 10.5 10.5 8 10.5S3 9.5 0.5 5.5z" fill="#999"/><circle cx="8" cy="5.5" r="3" fill="#f0f0f0"/><circle cx="8" cy="5.5" r="1.6" fill="#999"/></svg>
<svg style="left:104px;top:349px" width="16" height="16" viewBox="0 0 16 16"><defs><linearGradient id="bg349" x1="0" x2="1"><stop offset="0" stop-color="#fff"/><stop offset="1" stop-color="#b8bcc4"/></linearGradient></defs><rect x="1" y="0.8" width="14" height="14.4" rx="3" fill="url(#bg349)" stroke="#3a3f4a" stroke-width="1.1"/><path d="M1.5 3.5C4 5 12 5 14.5 3.5" fill="none" stroke="#3a3f4a" stroke-width="0.7"/></svg>
<div class="t" id="tb17" style="left:133px;top:351px;font-size:11.5px;color:#222;transform:scaleX(0.6667);transform-origin:0 0;">ボディ</div>
<div class="t" id="tbn17" style="left:157px;top:351px;font-size:11.5px;color:#222;">17</div>
<div class="row" style="left:76px;top:371px;width:111px"></div>
<svg style="left:79px;top:376px" width="16" height="11" viewBox="0 0 16 11"><path d="M0.5 5.5C3 1.5 5.5 0.5 8 0.5s5 1 7.5 5C13 9.5 10.5 10.5 8 10.5S3 9.5 0.5 5.5z" fill="#999"/><circle cx="8" cy="5.5" r="3" fill="#f0f0f0"/><circle cx="8" cy="5.5" r="1.6" fill="#999"/></svg>
<svg style="left:104px;top:373px" width="16" height="16" viewBox="0 0 16 16"><defs><linearGradient id="bg373" x1="0" x2="1"><stop offset="0" stop-color="#fff"/><stop offset="1" stop-color="#b8bcc4"/></linearGradient></defs><rect x="1" y="0.8" width="14" height="14.4" rx="3" fill="url(#bg373)" stroke="#3a3f4a" stroke-width="1.1"/><path d="M1.5 3.5C4 5 12 5 14.5 3.5" fill="none" stroke="#3a3f4a" stroke-width="0.7"/></svg>
<div class="t" id="tb135" style="left:133px;top:375px;font-size:11.5px;color:#222;transform:scaleX(0.6667);transform-origin:0 0;">ボディ</div>
<div class="t" id="tbn135" style="left:157px;top:375px;font-size:11.5px;color:#222;">135</div>
<div class="row" style="left:76px;top:395px;width:107px"></div>
<svg style="left:79px;top:400px" width="16" height="11" viewBox="0 0 16 11"><path d="M0.5 5.5C3 1.5 5.5 0.5 8 0.5s5 1 7.5 5C13 9.5 10.5 10.5 8 10.5S3 9.5 0.5 5.5z" fill="#999"/><circle cx="8" cy="5.5" r="3" fill="#f0f0f0"/><circle cx="8" cy="5.5" r="1.6" fill="#999"/></svg>
<svg style="left:104px;top:397px" width="16" height="16" viewBox="0 0 16 16"><defs><linearGradient id="bg397" x1="0" x2="1"><stop offset="0" stop-color="#fff"/><stop offset="1" stop-color="#b8bcc4"/></linearGradient></defs><rect x="1" y="0.8" width="14" height="14.4" rx="3" fill="url(#bg397)" stroke="#3a3f4a" stroke-width="1.1"/><path d="M1.5 3.5C4 5 12 5 14.5 3.5" fill="none" stroke="#3a3f4a" stroke-width="0.7"/></svg>
<div class="t" id="tb151" style="left:133px;top:399px;font-size:11.5px;color:#222;transform:scaleX(0.6667);transform-origin:0 0;">ボディ</div>
<div class="t" id="tbn151" style="left:157px;top:399px;font-size:11.5px;color:#222;">151</div>
<div class="row" style="left:76px;top:419px;width:111px"></div>
<svg style="left:79px;top:424px" width="16" height="11" viewBox="0 0 16 11"><path d="M0.5 5.5C3 1.5 5.5 0.5 8 0.5s5 1 7.5 5C13 9.5 10.5 10.5 8 10.5S3 9.5 0.5 5.5z" fill="#999"/><circle cx="8" cy="5.5" r="3" fill="#f0f0f0"/><circle cx="8" cy="5.5" r="1.6" fill="#999"/></svg>
<svg style="left:104px;top:421px" width="16" height="16" viewBox="0 0 16 16"><defs><linearGradient id="bg421" x1="0" x2="1"><stop offset="0" stop-color="#fff"/><stop offset="1" stop-color="#b8bcc4"/></linearGradient></defs><rect x="1" y="0.8" width="14" height="14.4" rx="3" fill="url(#bg421)" stroke="#3a3f4a" stroke-width="1.1"/><path d="M1.5 3.5C4 5 12 5 14.5 3.5" fill="none" stroke="#3a3f4a" stroke-width="0.7"/></svg>
<div class="t" id="tb167" style="left:133px;top:423px;font-size:11.5px;color:#222;transform:scaleX(0.6667);transform-origin:0 0;">ボディ</div>
<div class="t" id="tbn167" style="left:157px;top:423px;font-size:11.5px;color:#222;">167</div>
<div class="row" style="left:76px;top:443px;width:111px"></div>
<svg style="left:79px;top:448px" width="16" height="11" viewBox="0 0 16 11"><path d="M0.5 5.5C3 1.5 5.5 0.5 8 0.5s5 1 7.5 5C13 9.5 10.5 10.5 8 10.5S3 9.5 0.5 5.5z" fill="#999"/><circle cx="8" cy="5.5" r="3" fill="#f0f0f0"/><circle cx="8" cy="5.5" r="1.6" fill="#999"/></svg>
<svg style="left:104px;top:445px" width="16" height="16" viewBox="0 0 16 16"><defs><linearGradient id="bg445" x1="0" x2="1"><stop offset="0" stop-color="#fff"/><stop offset="1" stop-color="#b8bcc4"/></linearGradient></defs><rect x="1" y="0.8" width="14" height="14.4" rx="3" fill="url(#bg445)" stroke="#3a3f4a" stroke-width="1.1"/><path d="M1.5 3.5C4 5 12 5 14.5 3.5" fill="none" stroke="#3a3f4a" stroke-width="0.7"/></svg>
<div class="t" id="tb174" style="left:133px;top:447px;font-size:11.5px;color:#222;transform:scaleX(0.6667);transform-origin:0 0;">ボディ</div>
<div class="t" id="tbn174" style="left:157px;top:447px;font-size:11.5px;color:#222;">174</div>
<div class="row" style="left:76px;top:467px;width:111px"></div>
<svg style="left:79px;top:472px" width="16" height="11" viewBox="0 0 16 11"><path d="M0.5 5.5C3 1.5 5.5 0.5 8 0.5s5 1 7.5 5C13 9.5 10.5 10.5 8 10.5S3 9.5 0.5 5.5z" fill="#999"/><circle cx="8" cy="5.5" r="3" fill="#f0f0f0"/><circle cx="8" cy="5.5" r="1.6" fill="#999"/></svg>
<svg style="left:104px;top:469px" width="16" height="16" viewBox="0 0 16 16"><defs><linearGradient id="bg469" x1="0" x2="1"><stop offset="0" stop-color="#fff"/><stop offset="1" stop-color="#b8bcc4"/></linearGradient></defs><rect x="1" y="0.8" width="14" height="14.4" rx="3" fill="url(#bg469)" stroke="#3a3f4a" stroke-width="1.1"/><path d="M1.5 3.5C4 5 12 5 14.5 3.5" fill="none" stroke="#3a3f4a" stroke-width="0.7"/></svg>
<div class="t" id="tb175" style="left:133px;top:471px;font-size:11.5px;color:#222;transform:scaleX(0.6667);transform-origin:0 0;">ボディ</div>
<div class="t" id="tbn175" style="left:157px;top:471px;font-size:11.5px;color:#222;">175</div>
<div class="row" style="left:76px;top:491px;width:111px"></div>
<svg style="left:79px;top:496px" width="16" height="11" viewBox="0 0 16 11"><path d="M0.5 5.5C3 1.5 5.5 0.5 8 0.5s5 1 7.5 5C13 9.5 10.5 10.5 8 10.5S3 9.5 0.5 5.5z" fill="#999"/><circle cx="8" cy="5.5" r="3" fill="#f0f0f0"/><circle cx="8" cy="5.5" r="1.6" fill="#999"/></svg>
<svg style="left:104px;top:493px" width="16" height="16" viewBox="0 0 16 16"><defs><linearGradient id="bg493" x1="0" x2="1"><stop offset="0" stop-color="#fff"/><stop offset="1" stop-color="#b8bcc4"/></linearGradient></defs><rect x="1" y="0.8" width="14" height="14.4" rx="3" fill="url(#bg493)" stroke="#3a3f4a" stroke-width="1.1"/><path d="M1.5 3.5C4 5 12 5 14.5 3.5" fill="none" stroke="#3a3f4a" stroke-width="0.7"/></svg>
<div class="t" id="tb179" style="left:133px;top:495px;font-size:11.5px;color:#222;transform:scaleX(0.6667);transform-origin:0 0;">ボディ</div>
<div class="t" id="tbn179" style="left:157px;top:495px;font-size:11.5px;color:#222;">179</div>
<div class="row" style="left:76px;top:515px;width:111px"></div>
<svg style="left:79px;top:520px" width="16" height="11" viewBox="0 0 16 11"><path d="M0.5 5.5C3 1.5 5.5 0.5 8 0.5s5 1 7.5 5C13 9.5 10.5 10.5 8 10.5S3 9.5 0.5 5.5z" fill="#999"/><circle cx="8" cy="5.5" r="3" fill="#f0f0f0"/><circle cx="8" cy="5.5" r="1.6" fill="#999"/></svg>
<svg style="left:104px;top:517px" width="16" height="16" viewBox="0 0 16 16"><defs><linearGradient id="bg517" x1="0" x2="1"><stop offset="0" stop-color="#fff"/><stop offset="1" stop-color="#b8bcc4"/></linearGradient></defs><rect x="1" y="0.8" width="14" height="14.4" rx="3" fill="url(#bg517)" stroke="#3a3f4a" stroke-width="1.1"/><path d="M1.5 3.5C4 5 12 5 14.5 3.5" fill="none" stroke="#3a3f4a" stroke-width="0.7"/></svg>
<div class="t" id="tb180" style="left:133px;top:519px;font-size:11.5px;color:#222;transform:scaleX(0.6667);transform-origin:0 0;">ボディ</div>
<div class="t" id="tbn180" style="left:157px;top:519px;font-size:11.5px;color:#222;">180</div>
<div class="row" style="left:76px;top:539px;width:111px"></div>
<svg style="left:79px;top:544px" width="16" height="11" viewBox="0 0 16 11"><path d="M0.5 5.5C3 1.5 5.5 0.5 8 0.5s5 1 7.5 5C13 9.5 10.5 10.5 8 10.5S3 9.5 0.5 5.5z" fill="#999"/><circle cx="8" cy="5.5" r="3" fill="#f0f0f0"/><circle cx="8" cy="5.5" r="1.6" fill="#999"/></svg>
<svg style="left:104px;top:541px" width="16" height="16" viewBox="0 0 16 16"><defs><linearGradient id="bg541" x1="0" x2="1"><stop offset="0" stop-color="#fff"/><stop offset="1" stop-color="#b8bcc4"/></linearGradient></defs><rect x="1" y="0.8" width="14" height="14.4" rx="3" fill="url(#bg541)" stroke="#3a3f4a" stroke-width="1.1"/><path d="M1.5 3.5C4 5 12 5 14.5 3.5" fill="none" stroke="#3a3f4a" stroke-width="0.7"/></svg>
<div class="t" id="tb195" style="left:133px;top:543px;font-size:11.5px;color:#222;transform:scaleX(0.6667);transform-origin:0 0;">ボディ</div>
<div class="t" id="tbn195" style="left:157px;top:543px;font-size:11.5px;color:#222;">195</div>
<div class="row" style="left:76px;top:563px;width:111px"></div>
<svg style="left:79px;top:568px" width="16" height="11" viewBox="0 0 16 11"><path d="M0.5 5.5C3 1.5 5.5 0.5 8 0.5s5 1 7.5 5C13 9.5 10.5 10.5 8 10.5S3 9.5 0.5 5.5z" fill="#999"/><circle cx="8" cy="5.5" r="3" fill="#f0f0f0"/><circle cx="8" cy="5.5" r="1.6" fill="#999"/></svg>
<svg style="left:104px;top:565px" width="16" height="16" viewBox="0 0 16 16"><defs><linearGradient id="bg565" x1="0" x2="1"><stop offset="0" stop-color="#fff"/><stop offset="1" stop-color="#b8bcc4"/></linearGradient></defs><rect x="1" y="0.8" width="14" height="14.4" rx="3" fill="url(#bg565)" stroke="#3a3f4a" stroke-width="1.1"/><path d="M1.5 3.5C4 5 12 5 14.5 3.5" fill="none" stroke="#3a3f4a" stroke-width="0.7"/></svg>
<div class="t" id="tb198" style="left:133px;top:567px;font-size:11.5px;color:#222;transform:scaleX(0.6667);transform-origin:0 0;">ボディ</div>
<div class="t" id="tbn198" style="left:157px;top:567px;font-size:11.5px;color:#222;">198</div>
<div class="row" style="left:76px;top:587px;width:111px"></div>
<svg style="left:79px;top:592px" width="16" height="11" viewBox="0 0 16 11"><path d="M0.5 5.5C3 1.5 5.5 0.5 8 0.5s5 1 7.5 5C13 9.5 10.5 10.5 8 10.5S3 9.5 0.5 5.5z" fill="#999"/><circle cx="8" cy="5.5" r="3" fill="#f0f0f0"/><circle cx="8" cy="5.5" r="1.6" fill="#999"/></svg>
<svg style="left:104px;top:589px" width="16" height="16" viewBox="0 0 16 16"><defs><linearGradient id="bg589" x1="0" x2="1"><stop offset="0" stop-color="#fff"/><stop offset="1" stop-color="#b8bcc4"/></linearGradient></defs><rect x="1" y="0.8" width="14" height="14.4" rx="3" fill="url(#bg589)" stroke="#3a3f4a" stroke-width="1.1"/><path d="M1.5 3.5C4 5 12 5 14.5 3.5" fill="none" stroke="#3a3f4a" stroke-width="0.7"/></svg>
<div class="t" id="tb242" style="left:133px;top:591px;font-size:11.5px;color:#222;transform:scaleX(0.6667);transform-origin:0 0;">ボディ</div>
<div class="t" id="tbn242" style="left:157px;top:591px;font-size:11.5px;color:#222;">242</div>
<div class="row" style="left:76px;top:611px;width:111px"></div>
<svg style="left:79px;top:616px" width="16" height="11" viewBox="0 0 16 11"><path d="M0.5 5.5C3 1.5 5.5 0.5 8 0.5s5 1 7.5 5C13 9.5 10.5 10.5 8 10.5S3 9.5 0.5 5.5z" fill="#999"/><circle cx="8" cy="5.5" r="3" fill="#f0f0f0"/><circle cx="8" cy="5.5" r="1.6" fill="#999"/></svg>
<svg style="left:104px;top:613px" width="16" height="16" viewBox="0 0 16 16"><defs><linearGradient id="bg613" x1="0" x2="1"><stop offset="0" stop-color="#fff"/><stop offset="1" stop-color="#b8bcc4"/></linearGradient></defs><rect x="1" y="0.8" width="14" height="14.4" rx="3" fill="url(#bg613)" stroke="#3a3f4a" stroke-width="1.1"/><path d="M1.5 3.5C4 5 12 5 14.5 3.5" fill="none" stroke="#3a3f4a" stroke-width="0.7"/></svg>
<div class="t" id="tb278" style="left:133px;top:615px;font-size:11.5px;color:#222;transform:scaleX(0.6667);transform-origin:0 0;">ボディ</div>
<div class="t" id="tbn278" style="left:157px;top:615px;font-size:11.5px;color:#222;">278</div>
<div class="row" style="left:76px;top:635px;width:111px"></div>
<svg style="left:79px;top:640px" width="16" height="11" viewBox="0 0 16 11"><path d="M0.5 5.5C3 1.5 5.5 0.5 8 0.5s5 1 7.5 5C13 9.5 10.5 10.5 8 10.5S3 9.5 0.5 5.5z" fill="#999"/><circle cx="8" cy="5.5" r="3" fill="#f0f0f0"/><circle cx="8" cy="5.5" r="1.6" fill="#999"/></svg>
<svg style="left:104px;top:637px" width="16" height="16" viewBox="0 0 16 16"><defs><linearGradient id="bg637" x1="0" x2="1"><stop offset="0" stop-color="#fff"/><stop offset="1" stop-color="#b8bcc4"/></linearGradient></defs><rect x="1" y="0.8" width="14" height="14.4" rx="3" fill="url(#bg637)" stroke="#3a3f4a" stroke-width="1.1"/><path d="M1.5 3.5C4 5 12 5 14.5 3.5" fill="none" stroke="#3a3f4a" stroke-width="0.7"/></svg>
<div class="t" id="tb293" style="left:133px;top:639px;font-size:11.5px;color:#222;transform:scaleX(0.6667);transform-origin:0 0;">ボディ</div>
<div class="t" id="tbn293" style="left:157px;top:639px;font-size:11.5px;color:#222;">293</div>
<div class="row" style="left:76px;top:659px;width:111px"></div>
<svg style="left:79px;top:664px" width="16" height="11" viewBox="0 0 16 11"><path d="M0.5 5.5C3 1.5 5.5 0.5 8 0.5s5 1 7.5 5C13 9.5 10.5 10.5 8 10.5S3 9.5 0.5 5.5z" fill="#999"/><circle cx="8" cy="5.5" r="3" fill="#f0f0f0"/><circle cx="8" cy="5.5" r="1.6" fill="#999"/></svg>
<svg style="left:104px;top:661px" width="16" height="16" viewBox="0 0 16 16"><defs><linearGradient id="bg661" x1="0" x2="1"><stop offset="0" stop-color="#fff"/><stop offset="1" stop-color="#b8bcc4"/></linearGradient></defs><rect x="1" y="0.8" width="14" height="14.4" rx="3" fill="url(#bg661)" stroke="#3a3f4a" stroke-width="1.1"/><path d="M1.5 3.5C4 5 12 5 14.5 3.5" fill="none" stroke="#3a3f4a" stroke-width="0.7"/></svg>
<div class="t" id="tb302" style="left:133px;top:663px;font-size:11.5px;color:#222;transform:scaleX(0.6667);transform-origin:0 0;">ボディ</div>
<div class="t" id="tbn302" style="left:157px;top:663px;font-size:11.5px;color:#222;">302</div>
<div class="row" style="left:76px;top:683px;width:111px"></div>
<svg style="left:79px;top:688px" width="16" height="11" viewBox="0 0 16 11"><path d="M0.5 5.5C3 1.5 5.5 0.5 8 0.5s5 1 7.5 5C13 9.5 10.5 10.5 8 10.5S3 9.5 0.5 5.5z" fill="#999"/><circle cx="8" cy="5.5" r="3" fill="#f0f0f0"/><circle cx="8" cy="5.5" r="1.6" fill="#999"/></svg>
<svg style="left:104px;top:685px" width="16" height="16" viewBox="0 0 16 16"><defs><linearGradient id="bg685" x1="0" x2="1"><stop offset="0" stop-color="#fff"/><stop offset="1" stop-color="#b8bcc4"/></linearGradient></defs><rect x="1" y="0.8" width="14" height="14.4" rx="3" fill="url(#bg685)" stroke="#3a3f4a" stroke-width="1.1"/><path d="M1.5 3.5C4 5 12 5 14.5 3.5" fill="none" stroke="#3a3f4a" stroke-width="0.7"/></svg>
<div class="t" id="tb304" style="left:133px;top:687px;font-size:11.5px;color:#222;transform:scaleX(0.6667);transform-origin:0 0;">ボディ</div>
<div class="t" id="tbn304" style="left:157px;top:687px;font-size:11.5px;color:#222;">304</div>
<div class="row" style="left:76px;top:707px;width:111px"></div>
<svg style="left:79px;top:712px" width="16" height="11" viewBox="0 0 16 11"><path d="M0.5 5.5C3 1.5 5.5 0.5 8 0.5s5 1 7.5 5C13 9.5 10.5 10.5 8 10.5S3 9.5 0.5 5.5z" fill="#999"/><circle cx="8" cy="5.5" r="3" fill="#f0f0f0"/><circle cx="8" cy="5.5" r="1.6" fill="#999"/></svg>
<svg style="left:104px;top:709px" width="16" height="16" viewBox="0 0 16 16"><defs><linearGradient id="bg709" x1="0" x2="1"><stop offset="0" stop-color="#fff"/><stop offset="1" stop-color="#b8bcc4"/></linearGradient></defs><rect x="1" y="0.8" width="14" height="14.4" rx="3" fill="url(#bg709)" stroke="#3a3f4a" stroke-width="1.1"/><path d="M1.5 3.5C4 5 12 5 14.5 3.5" fill="none" stroke="#3a3f4a" stroke-width="0.7"/></svg>
<div class="t" id="tb305" style="left:133px;top:711px;font-size:11.5px;color:#222;transform:scaleX(0.6667);transform-origin:0 0;">ボディ</div>
<div class="t" id="tbn305" style="left:157px;top:711px;font-size:11.5px;color:#222;">305</div>
<div class="row" style="left:76px;top:731px;width:111px"></div>
<svg style="left:79px;top:736px" width="16" height="11" viewBox="0 0 16 11"><path d="M0.5 5.5C3 1.5 5.5 0.5 8 0.5s5 1 7.5 5C13 9.5 10.5 10.5 8 10.5S3 9.5 0.5 5.5z" fill="#999"/><circle cx="8" cy="5.5" r="3" fill="#f0f0f0"/><circle cx="8" cy="5.5" r="1.6" fill="#999"/></svg>
<svg style="left:104px;top:733px" width="16" height="16" viewBox="0 0 16 16"><defs><linearGradient id="bg733" x1="0" x2="1"><stop offset="0" stop-color="#fff"/><stop offset="1" stop-color="#b8bcc4"/></linearGradient></defs><rect x="1" y="0.8" width="14" height="14.4" rx="3" fill="url(#bg733)" stroke="#3a3f4a" stroke-width="1.1"/><path d="M1.5 3.5C4 5 12 5 14.5 3.5" fill="none" stroke="#3a3f4a" stroke-width="0.7"/></svg>
<div class="t" id="tb306" style="left:133px;top:735px;font-size:11.5px;color:#222;transform:scaleX(0.6667);transform-origin:0 0;">ボディ</div>
<div class="t" id="tbn306" style="left:157px;top:735px;font-size:11.5px;color:#222;">306</div>
<div class="row" style="left:76px;top:755px;width:111px"></div>
<svg style="left:79px;top:760px" width="16" height="11" viewBox="0 0 16 11"><path d="M0.5 5.5C3 1.5 5.5 0.5 8 0.5s5 1 7.5 5C13 9.5 10.5 10.5 8 10.5S3 9.5 0.5 5.5z" fill="#999"/><circle cx="8" cy="5.5" r="3" fill="#f0f0f0"/><circle cx="8" cy="5.5" r="1.6" fill="#999"/></svg>
<svg style="left:104px;top:757px" width="16" height="16" viewBox="0 0 16 16"><defs><linearGradient id="bg757" x1="0" x2="1"><stop offset="0" stop-color="#fff"/><stop offset="1" stop-color="#b8bcc4"/></linearGradient></defs><rect x="1" y="0.8" width="14" height="14.4" rx="3" fill="url(#bg757)" stroke="#3a3f4a" stroke-width="1.1"/><path d="M1.5 3.5C4 5 12 5 14.5 3.5" fill="none" stroke="#3a3f4a" stroke-width="0.7"/></svg>
<div class="t" id="tb309" style="left:133px;top:759px;font-size:11.5px;color:#222;transform:scaleX(0.6667);transform-origin:0 0;">ボディ</div>
<div class="t" id="tbn309" style="left:157px;top:759px;font-size:11.5px;color:#222;">309</div>
<div class="row" style="left:76px;top:779px;width:111px"></div>
<svg style="left:79px;top:784px" width="16" height="11" viewBox="0 0 16 11"><path d="M0.5 5.5C3 1.5 5.5 0.5 8 0.5s5 1 7.5 5C13 9.5 10.5 10.5 8 10.5S3 9.5 0.5 5.5z" fill="#999"/><circle cx="8" cy="5.5" r="3" fill="#f0f0f0"/><circle cx="8" cy="5.5" r="1.6" fill="#999"/></svg>
<svg style="left:104px;top:781px" width="16" height="16" viewBox="0 0 16 16"><defs><linearGradient id="bg781" x1="0" x2="1"><stop offset="0" stop-color="#fff"/><stop offset="1" stop-color="#b8bcc4"/></linearGradient></defs><rect x="1" y="0.8" width="14" height="14.4" rx="3" fill="url(#bg781)" stroke="#3a3f4a" stroke-width="1.1"/><path d="M1.5 3.5C4 5 12 5 14.5 3.5" fill="none" stroke="#3a3f4a" stroke-width="0.7"/></svg>
<div class="t" id="tb310" style="left:133px;top:783px;font-size:11.5px;color:#222;transform:scaleX(0.6667);transform-origin:0 0;">ボディ</div>
<div class="t" id="tbn310" style="left:157px;top:783px;font-size:11.5px;color:#222;">310</div>
<div class="row" style="left:58px;top:803px;width:139px"></div>
<svg style="left:40px;top:807px" width="10" height="13" viewBox="0 0 10 13"><path d="M1 1L9 6.5L1 12z" fill="#eee" stroke="#111" stroke-width="1.2" stroke-linejoin="round"/></svg>
<svg style="left:61px;top:808px" width="16" height="11" viewBox="0 0 16 11"><path d="M0.5 5.5C3 1.5 5.5 0.5 8 0.5s5 1 7.5 5C13 9.5 10.5 10.5 8 10.5S3 9.5 0.5 5.5z" fill="#999"/><circle cx="8" cy="5.5" r="3" fill="#f0f0f0"/><circle cx="8" cy="5.5" r="1.6" fill="#999"/></svg>
<svg style="left:86px;top:807px" width="16" height="13" viewBox="0 0 16 13"><path d="M0 0h6l1.5 1.5H16V13H0z" fill="#9a9a9a"/><path d="M0 2.5h16" stroke="#f0f0f0" stroke-width="0.8"/></svg>
<div class="t" id="tcon" style="left:115px;top:807px;font-size:11.5px;color:#222;transform:scaleX(0.6574);transform-origin:0 0;">コンストラクション</div>
<div class="row" style="left:58px;top:827px;width:86px"></div>
<svg style="left:61px;top:829px" width="16" height="16" viewBox="0 0 16 16"><path d="M0.5 4l3-3h8v10.5l-3 3h-8z" fill="#5aaae6"/><path d="M0.5 4l3-3h8l-3 3z" fill="#8fcdf7"/><path d="M8.5 4l3-3v10.5l-3 3z" fill="#3f88c8"/><path d="M0.5 14.5h8l3-3v1.5l-3 3h-8z" fill="#c8c8c8"/><path d="M14.5 13V2" stroke="#222" stroke-width="1.1"/><path d="M13 3.5l1.5-3 1.5 3z" fill="#222"/></svg>
<div class="t" id="tex1" style="left:90px;top:831px;font-size:11.5px;color:#222;transform:scaleX(0.7708);transform-origin:0 0;">押し出し</div>
<div class="t" id="texn1" style="left:128px;top:831px;font-size:11.5px;color:#222;">1</div>
<div class="row" style="left:58px;top:851px;width:90px"></div>
<svg style="left:61px;top:853px" width="16" height="16" viewBox="0 0 16 16"><path d="M0.5 4l3-3h8v10.5l-3 3h-8z" fill="#5aaae6"/><path d="M0.5 4l3-3h8l-3 3z" fill="#8fcdf7"/><path d="M8.5 4l3-3v10.5l-3 3z" fill="#3f88c8"/><path d="M0.5 14.5h8l3-3v1.5l-3 3h-8z" fill="#c8c8c8"/><path d="M14.5 13V2" stroke="#222" stroke-width="1.1"/><path d="M13 3.5l1.5-3 1.5 3z" fill="#222"/></svg>
<div class="t" id="tex11" style="left:90px;top:855px;font-size:11.5px;color:#222;transform:scaleX(0.7708);transform-origin:0 0;">押し出し</div>
<div class="t" id="texn11" style="left:128px;top:855px;font-size:11.5px;color:#222;">11</div>
<div class="row" style="left:58px;top:875px;width:94px"></div>
<svg style="left:61px;top:877px" width="16" height="16" viewBox="0 0 16 16"><path d="M0.5 4l3-3h8v10.5l-3 3h-8z" fill="#5aaae6"/><path d="M0.5 4l3-3h8l-3 3z" fill="#8fcdf7"/><path d="M8.5 4l3-3v10.5l-3 3z" fill="#3f88c8"/><path d="M0.5 14.5h8l3-3v1.5l-3 3h-8z" fill="#c8c8c8"/><path d="M14.5 13V2" stroke="#222" stroke-width="1.1"/><path d="M13 3.5l1.5-3 1.5 3z" fill="#222"/></svg>
<div class="t" id="tex12" style="left:90px;top:879px;font-size:11.5px;color:#222;transform:scaleX(0.7708);transform-origin:0 0;">押し出し</div>
<div class="t" id="texn12" style="left:128px;top:879px;font-size:11.5px;color:#222;">12</div>
<div class="row" style="left:58px;top:899px;width:94px"></div>
<svg style="left:61px;top:901px" width="16" height="16" viewBox="0 0 16 16"><path d="M0.5 4l3-3h8v10.5l-3 3h-8z" fill="#5aaae6"/><path d="M0.5 4l3-3h8l-3 3z" fill="#8fcdf7"/><path d="M8.5 4l3-3v10.5l-3 3z" fill="#3f88c8"/><path d="M0.5 14.5h8l3-3v1.5l-3 3h-8z" fill="#c8c8c8"/><path d="M14.5 13V2" stroke="#222" stroke-width="1.1"/><path d="M13 3.5l1.5-3 1.5 3z" fill="#222"/></svg>
<div class="t" id="tex75" style="left:90px;top:903px;font-size:11.5px;color:#222;transform:scaleX(0.7708);transform-origin:0 0;">押し出し</div>
<div class="t" id="texn75" style="left:128px;top:903px;font-size:11.5px;color:#222;">75</div>
<div class="row" style="left:58px;top:923px;width:94px"></div>
<svg style="left:61px;top:925px" width="16" height="16" viewBox="0 0 16 16"><path d="M0.5 4l3-3h8v10.5l-3 3h-8z" fill="#5aaae6"/><path d="M0.5 4l3-3h8l-3 3z" fill="#8fcdf7"/><path d="M8.5 4l3-3v10.5l-3 3z" fill="#3f88c8"/><path d="M0.5 14.5h8l3-3v1.5l-3 3h-8z" fill="#c8c8c8"/><path d="M14.5 13V2" stroke="#222" stroke-width="1.1"/><path d="M13 3.5l1.5-3 1.5 3z" fill="#222"/></svg>
<div class="t" id="tex76" style="left:90px;top:927px;font-size:11.5px;color:#222;transform:scaleX(0.7708);transform-origin:0 0;">押し出し</div>
<div class="t" id="texn76" style="left:128px;top:927px;font-size:11.5px;color:#222;">76</div>
<div class="row" style="left:58px;top:947px;width:94px"></div>
<svg style="left:61px;top:949px" width="16" height="16" viewBox="0 0 16 16"><path d="M0.5 4l3-3h8v10.5l-3 3h-8z" fill="#5aaae6"/><path d="M0.5 4l3-3h8l-3 3z" fill="#8fcdf7"/><path d="M8.5 4l3-3v10.5l-3 3z" fill="#3f88c8"/><path d="M0.5 14.5h8l3-3v1.5l-3 3h-8z" fill="#c8c8c8"/><path d="M14.5 13V2" stroke="#222" stroke-width="1.1"/><path d="M13 3.5l1.5-3 1.5 3z" fill="#222"/></svg>
<div class="t" id="tex77" style="left:90px;top:951px;font-size:11.5px;color:#222;transform:scaleX(0.7708);transform-origin:0 0;">押し出し</div>
<div class="t" id="texn77" style="left:128px;top:951px;font-size:11.5px;color:#222;">77</div>
<div class="row" style="left:58px;top:971px;width:94px"></div>
<svg style="left:61px;top:973px" width="16" height="16" viewBox="0 0 16 16"><path d="M0.5 4l3-3h8v10.5l-3 3h-8z" fill="#5aaae6"/><path d="M0.5 4l3-3h8l-3 3z" fill="#8fcdf7"/><path d="M8.5 4l3-3v10.5l-3 3z" fill="#3f88c8"/><path d="M0.5 14.5h8l3-3v1.5l-3 3h-8z" fill="#c8c8c8"/><path d="M14.5 13V2" stroke="#222" stroke-width="1.1"/><path d="M13 3.5l1.5-3 1.5 3z" fill="#222"/></svg>
<div class="t" id="tex78" style="left:90px;top:975px;font-size:11.5px;color:#222;transform:scaleX(0.7708);transform-origin:0 0;">押し出し</div>
<div class="t" id="texn78" style="left:128px;top:975px;font-size:11.5px;color:#222;">78</div>
<div class="a" style="left:4px;top:1019px;width:300px;height:25px;background:#f1f1f1;border:1px solid #c8c8c8"></div>
<div class="t" id="tcom" style="left:28px;top:1025px;font-size:11px;color:#444;transform:scaleX(0.7045);transform-origin:0 0;">コメント</div>
<svg style="left:282px;top:1026px" width="11" height="11" viewBox="0 0 11 11"><circle cx="5.5" cy="5.5" r="5.5" fill="#222"/><rect x="2.5" y="4.6" width="6" height="1.8" fill="#fff"/><rect x="4.6" y="2.5" width="1.8" height="6" fill="#fff"/></svg>
<div class="a" style="left:299px;top:1026px;width:1px;height:11px;background:#777"></div><div class="a" style="left:301px;top:1026px;width:1px;height:11px;background:#aaa"></div>
<div class="a" style="left:841px;top:1020px;width:237px;height:24px;background:#f0f0f0"></div>
<svg style="left:0;top:0" width="1100" height="1056" viewBox="0 0 1100 1056">
<g stroke="#333" fill="none" stroke-width="1.1"><path d="M852 1040V1025M849.5 1027.5l2.5-3 2.5 3"/><ellipse cx="852" cy="1033" rx="7.5" ry="3"/></g><path d="M844.5 1035l3-2v4z" fill="#222"/>
<path d="M866 1031h6l-3 4z" fill="#222"/>
<rect x="877.5" y="1029.5" width="15" height="10" fill="#f4f4f4" stroke="#444" stroke-width="1.1"/><rect x="880.5" y="1032.5" width="9" height="4" fill="#bbb" stroke="#444" stroke-width="0.8"/><path d="M879 1029l3-4 3 2 3-2 3 2v2" fill="#ddd" stroke="#444" stroke-width="0.9"/>
<path d="M906 1040c-2-2-4-5-5-7s1-2 2 0l1 1V1026c0-1.5 2-1.5 2 0v4V1025c0-1.5 2-1.5 2 0v5V1026c0-1.5 2-1.5 2 0v5V1028c0-1.5 2-1.5 2 0v6c0 3-1.5 6-3 6z" fill="#fff" stroke="#444" stroke-width="1"/>
<circle cx="934.5" cy="1032" r="5" fill="#e6f0f4" stroke="#333" stroke-width="1.2"/><path d="M938 1035.5l4 4" stroke="#333" stroke-width="2.4"/><path d="M941 1026h5M943.5 1023.5v5M941 1029.5h5" stroke="#333" stroke-width="1"/>
<rect x="955.5" y="1024.5" width="15" height="15" fill="none" stroke="#444" stroke-width="0.9" stroke-dasharray="2 1.5"/><circle cx="962" cy="1031" r="5.5" fill="#e6f0f4" stroke="#333" stroke-width="1.2"/><path d="M966 1035l4.5 4.5" stroke="#333" stroke-width="2.4"/>
<path d="M976 1031h6l-3 4z" fill="#222"/>
<rect x="988.5" y="1024.5" width="16" height="12" rx="1" fill="#7aa0d8" stroke="#444" stroke-width="1.1"/><rect x="990.5" y="1026.5" width="12" height="8" fill="#9ab8e6"/><path d="M993 1039.5h7" stroke="#444" stroke-width="1.5"/>
<path d="M1007 1031h6l-3 4z" fill="#222"/>
<rect x="1019.5" y="1024.5" width="15" height="15" fill="#777" stroke="#555" stroke-width="1"/><path d="M1023.5 1024.5v15M1027.5 1024.5v15M1031.5 1024.5v15M1019.5 1028.5h15M1019.5 1032.5h15M1019.5 1036.5h15" stroke="#ddd" stroke-width="1"/>
<path d="M1038 1031h6l-3 4z" fill="#222"/>
<rect x="1049.5" y="1024.5" width="16" height="15" rx="1" fill="#3a64b0"/><rect x="1051.5" y="1026.5" width="5" height="4.5" fill="#a8c4ec"/><rect x="1058.5" y="1026.5" width="5" height="4.5" fill="#a8c4ec"/><rect x="1051.5" y="1033" width="5" height="4.5" fill="#a8c4ec"/><rect x="1058.5" y="1033" width="5" height="4.5" fill="#a8c4ec"/>
<path d="M1068 1031h6l-3 4z" fill="#222"/>
</svg>
<svg style="left:1790px;top:145px" width="130" height="120" viewBox="1790 145 130 120">
<defs><radialGradient id="vsh" cx="0.5" cy="0.5" r="0.5"><stop offset="0" stop-color="#000" stop-opacity="0.18"/><stop offset="1" stop-color="#000" stop-opacity="0"/></radialGradient></defs>
<ellipse cx="1862" cy="238" rx="34" ry="14" fill="url(#vsh)"/>
<path d="M1821.5 188.5L1860.5 169.5L1893 195L1852 217z" fill="#ececec"/>
<path d="M1821.5 188.5L1852 217L1852 249L1825 221z" fill="#e3e3e3"/>
<path d="M1852 217L1893 195L1889 226L1852 249z" fill="#dedede"/>
<g stroke="#777" stroke-width="0.9" stroke-dasharray="2.5 1.5" fill="none"><path d="M1821.5 188.5L1860.5 169.5L1893 195L1889 226L1852 249L1825 221z"/><path d="M1852 217V249M1852 217L1893 195M1852 217L1821.5 188.5"/></g>
<g font-family="Liberation Sans, sans-serif" fill="#7d7d7d" text-anchor="middle">
<text transform="matrix(30.5 28.5 -39 19 1860.5 169.5)" x="0.52" y="0.76" font-size="0.58">上</text>
<text transform="matrix(30.5 28.5 3.5 32.5 1821.5 188.5)" x="0.5" y="0.76" font-size="0.58" fill="#9a9a9a">前</text>
<text transform="matrix(41 -22 -3.5 32 1852 217)" x="0.5" y="0.76" font-size="0.58" fill="#8a8a8a">右</text>
</g>
<path d="M1861 152l1.5 9 1.5-9M1862.5 161v8" stroke="#6ee06e" stroke-width="1.6" fill="none"/>
<path d="M1813 222h5l-5 7h5M1820 221l6-3" stroke="#7a7af0" stroke-width="1.5" fill="none"/>
<path d="M1887 227l6 3M1895 229l4 7M1899 229l-4 7" stroke="#f09090" stroke-width="1.5" fill="none"/>
</svg>
<div class="a" style="left:0;top:1048px;width:1920px;height:8px;background:#111"></div>
<div class="a" style="left:48px;top:1048px;width:344px;height:8px;background:#f0f0f0"></div>
<div class="a" style="left:688px;top:1048px;width:47px;height:8px;background:#a3561c"></div>
<div class="a" style="left:834px;top:1048px;width:48px;height:8px;background:#333"></div>
<div class="a" style="left:1822px;top:1053px;width:4px;height:3px;background:#ddd"></div><div class="a" style="left:1830px;top:1053px;width:4px;height:3px;background:#ddd"></div><div class="a" style="left:1838px;top:1053px;width:2px;height:3px;background:#ddd"></div>
<div class="a" style="left:1915px;top:1048px;width:1px;height:8px;background:#777"></div>
</body></html>
